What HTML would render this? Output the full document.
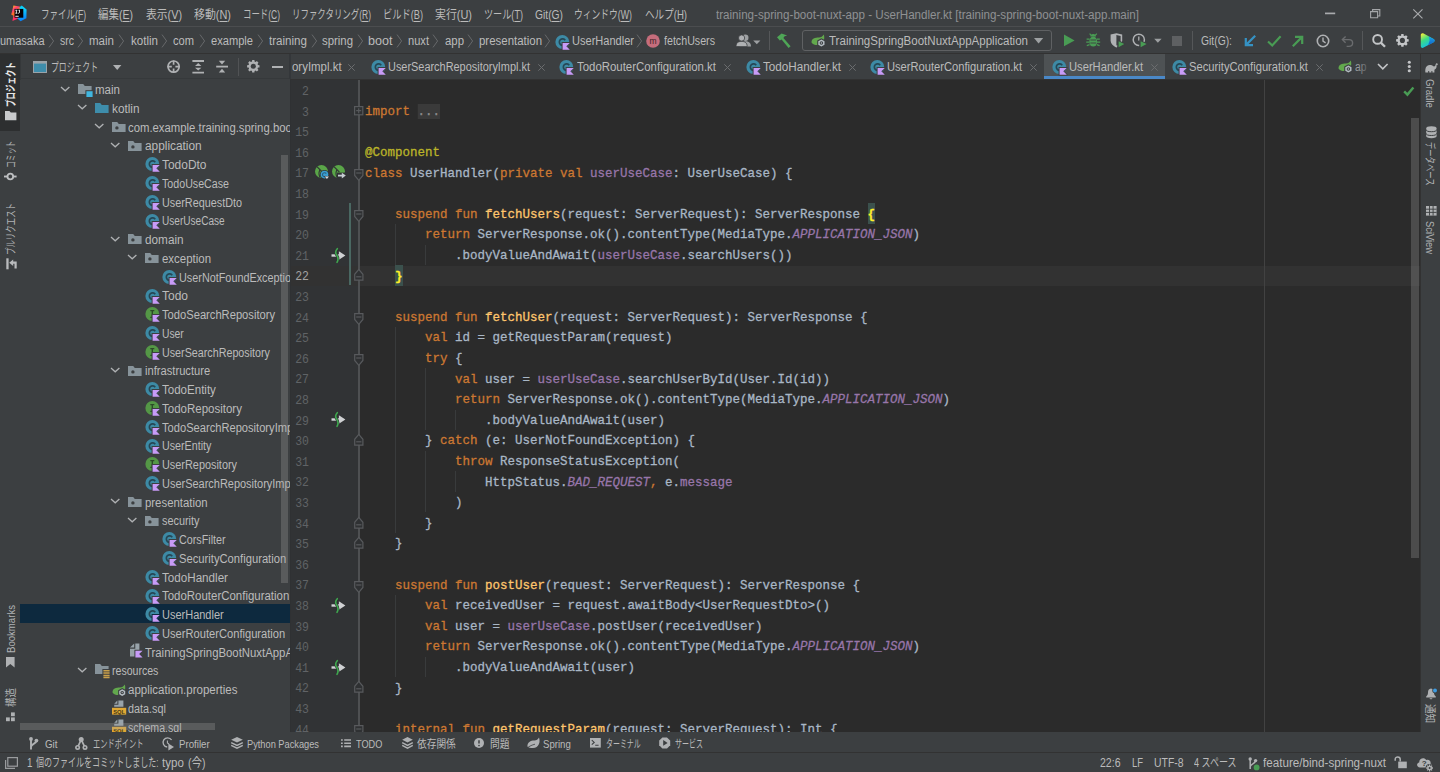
<!DOCTYPE html><html lang="ja"><head><meta charset="utf-8"><title>UserHandler.kt</title><style>html,body{margin:0;padding:0;background:#3c3f41;}#app{position:relative;width:1440px;height:772px;overflow:hidden;background:#3c3f41;font-family:'Liberation Sans','Noto Sans CJK JP',sans-serif;font-size:12px;color:#bbbbbb;}#app span,#app div,#app svg{box-sizing:border-box}svg{overflow:visible}</style></head><body><div id="app"><div style="position:absolute;left:0px;top:0px;width:1440px;height:772px;background:#3c3f41;"></div>
<span style="position:absolute;left:41px;top:1.7px;height:27px;line-height:27px;font-size:12px;color:#bbbbbb;white-space:pre;transform:scaleX(0.7106);transform-origin:0 50%;">ファイル(<u style="text-underline-offset:1.5px;text-decoration-thickness:1px">F</u>)</span>
<span style="position:absolute;left:98px;top:1.7px;height:27px;line-height:27px;font-size:12px;color:#bbbbbb;white-space:pre;transform:scaleX(0.8750);transform-origin:0 50%;">編集(<u style="text-underline-offset:1.5px;text-decoration-thickness:1px">E</u>)</span>
<span style="position:absolute;left:146px;top:1.7px;height:27px;line-height:27px;font-size:12px;color:#bbbbbb;white-space:pre;transform:scaleX(0.9000);transform-origin:0 50%;">表示(<u style="text-underline-offset:1.5px;text-decoration-thickness:1px">V</u>)</span>
<span style="position:absolute;left:194px;top:1.7px;height:27px;line-height:27px;font-size:12px;color:#bbbbbb;white-space:pre;transform:scaleX(0.9097);transform-origin:0 50%;">移動(<u style="text-underline-offset:1.5px;text-decoration-thickness:1px">N</u>)</span>
<span style="position:absolute;left:243px;top:1.7px;height:27px;line-height:27px;font-size:12px;color:#bbbbbb;white-space:pre;transform:scaleX(0.7025);transform-origin:0 50%;">コード(<u style="text-underline-offset:1.5px;text-decoration-thickness:1px">C</u>)</span>
<span style="position:absolute;left:292px;top:1.7px;height:27px;line-height:27px;font-size:12px;color:#bbbbbb;white-space:pre;transform:scaleX(0.7042);transform-origin:0 50%;">リファクタリング(<u style="text-underline-offset:1.5px;text-decoration-thickness:1px">R</u>)</span>
<span style="position:absolute;left:383px;top:1.7px;height:27px;line-height:27px;font-size:12px;color:#bbbbbb;white-space:pre;transform:scaleX(0.7692);transform-origin:0 50%;">ビルド(<u style="text-underline-offset:1.5px;text-decoration-thickness:1px">B</u>)</span>
<span style="position:absolute;left:435px;top:1.7px;height:27px;line-height:27px;font-size:12px;color:#bbbbbb;white-space:pre;transform:scaleX(0.9097);transform-origin:0 50%;">実行(<u style="text-underline-offset:1.5px;text-decoration-thickness:1px">U</u>)</span>
<span style="position:absolute;left:484px;top:1.7px;height:27px;line-height:27px;font-size:12px;color:#bbbbbb;white-space:pre;transform:scaleX(0.7598);transform-origin:0 50%;">ツール(<u style="text-underline-offset:1.5px;text-decoration-thickness:1px">T</u>)</span>
<span style="position:absolute;left:535px;top:1.7px;height:27px;line-height:27px;font-size:12px;color:#bbbbbb;white-space:pre;transform:scaleX(0.8570);transform-origin:0 50%;">Git(<u style="text-underline-offset:1.5px;text-decoration-thickness:1px">G</u>)</span>
<span style="position:absolute;left:574px;top:1.7px;height:27px;line-height:27px;font-size:12px;color:#bbbbbb;white-space:pre;transform:scaleX(0.7311);transform-origin:0 50%;">ウィンドウ(<u style="text-underline-offset:1.5px;text-decoration-thickness:1px">W</u>)</span>
<span style="position:absolute;left:645px;top:1.7px;height:27px;line-height:27px;font-size:12px;color:#bbbbbb;white-space:pre;transform:scaleX(0.7974);transform-origin:0 50%;">ヘルプ(<u style="text-underline-offset:1.5px;text-decoration-thickness:1px">H</u>)</span>
<span style="position:absolute;left:716px;top:1.5px;height:27px;line-height:27px;font-size:12px;color:#8f9193;white-space:pre;transform:scaleX(0.9668);transform-origin:0 50%;">training-spring-boot-nuxt-app - UserHandler.kt [training-spring-boot-nuxt-app.main]</span>
<svg style="position:absolute;left:10.8px;top:5px;" width="17" height="17" viewBox="0 0 17 17"><linearGradient id="lg1" x1="0.1" y1="0" x2="0.6" y2="1"><stop offset="0" stop-color="#fdc80e"/><stop offset="0.28" stop-color="#fe3a7a"/><stop offset="0.5" stop-color="#fd7a1a"/><stop offset="0.75" stop-color="#fe2d6a"/><stop offset="1" stop-color="#fe2857"/></linearGradient><linearGradient id="lg2" x1="0.3" y1="0" x2="0.5" y2="1"><stop offset="0" stop-color="#07c3f2"/><stop offset="0.25" stop-color="#10d4fa"/><stop offset="1" stop-color="#087cfa"/></linearGradient><path d="M2.4,0.6 L8.8,1.4 L9.8,9 L6.8,13.8 L1.4,15.9 L2.4,10.8 L0.2,9.4 L1.2,5.8 z" fill="url(#lg1)"/><path d="M8.6,2 L10.8,0.4 L15.6,4.4 L15.4,13.2 L9.6,16.3 L6.4,13.6 L9.2,8.6 z" fill="url(#lg2)"/><rect x="3.5" y="3.9" width="8.8" height="8.8" fill="#050005"/><rect x="4.3" y="10.8" width="3.4" height="0.95" fill="#ffffff"/><path d="M4.3,5.2 h2.1 M5.35,5.2 v3 M4.3,8.2 h2.1 M8.5,5.2 v2.2 c0,0.9 -1,1.1 -1.5,0.5 M7.4,5.2 h1.6" stroke="#ffffff" stroke-width="0.85" fill="none"/></svg>
<svg style="position:absolute;left:1325.4px;top:12.4px;" width="11" height="3" viewBox="0 0 11 3"><path d="M0,1.4 h10.2" stroke="#a9abad" stroke-width="1.7"/></svg>
<svg style="position:absolute;left:1369.6px;top:8.8px;" width="11" height="10" viewBox="0 0 11 10"><path d="M0.6,2.6 h7 v6.2 h-7 z" fill="none" stroke="#a4a6a8" stroke-width="1.1"/><path d="M2.6,2.4 v-1.8 h7.2 v6.4 h-2" fill="none" stroke="#a4a6a8" stroke-width="1.1"/></svg>
<svg style="position:absolute;left:1413.4px;top:8.9px;" width="10" height="10" viewBox="0 0 10 10"><path d="M0.3,0.3 L9.5,9.3 M9.5,0.3 L0.3,9.3" stroke="#a9abad" stroke-width="1.15"/></svg>
<div style="position:absolute;left:0px;top:26px;width:1440px;height:1px;background:#4b4d4f;"></div>
<span style="position:absolute;left:0px;top:28.2px;height:27px;line-height:27px;font-size:12px;color:#bbbbbb;white-space:pre;transform:scaleX(0.9137);transform-origin:0 50%;">umasaka</span>
<span style="position:absolute;left:60px;top:28.2px;height:27px;line-height:27px;font-size:12px;color:#bbbbbb;white-space:pre;transform:scaleX(0.8750);transform-origin:0 50%;">src</span>
<span style="position:absolute;left:89px;top:28.2px;height:27px;line-height:27px;font-size:12px;color:#bbbbbb;white-space:pre;transform:scaleX(0.9610);transform-origin:0 50%;">main</span>
<span style="position:absolute;left:131px;top:28.2px;height:27px;line-height:27px;font-size:12px;color:#bbbbbb;white-space:pre;transform:scaleX(0.9637);transform-origin:0 50%;">kotlin</span>
<span style="position:absolute;left:173px;top:28.2px;height:27px;line-height:27px;font-size:12px;color:#bbbbbb;white-space:pre;transform:scaleX(0.9263);transform-origin:0 50%;">com</span>
<span style="position:absolute;left:211px;top:28.2px;height:27px;line-height:27px;font-size:12px;color:#bbbbbb;white-space:pre;transform:scaleX(0.9259);transform-origin:0 50%;">example</span>
<span style="position:absolute;left:269px;top:28.2px;height:27px;line-height:27px;font-size:12px;color:#bbbbbb;white-space:pre;transform:scaleX(0.9655);transform-origin:0 50%;">training</span>
<span style="position:absolute;left:322px;top:28.2px;height:27px;line-height:27px;font-size:12px;color:#bbbbbb;white-space:pre;transform:scaleX(0.9484);transform-origin:0 50%;">spring</span>
<span style="position:absolute;left:368px;top:28.2px;height:27px;line-height:27px;font-size:12px;color:#bbbbbb;white-space:pre;transform:scaleX(1.0488);transform-origin:0 50%;">boot</span>
<span style="position:absolute;left:408px;top:28.2px;height:27px;line-height:27px;font-size:12px;color:#bbbbbb;white-space:pre;transform:scaleX(0.9256);transform-origin:0 50%;">nuxt</span>
<span style="position:absolute;left:445px;top:28.2px;height:27px;line-height:27px;font-size:12px;color:#bbbbbb;white-space:pre;transform:scaleX(0.9485);transform-origin:0 50%;">app</span>
<span style="position:absolute;left:479px;top:28.2px;height:27px;line-height:27px;font-size:12px;color:#bbbbbb;white-space:pre;transform:scaleX(0.9539);transform-origin:0 50%;">presentation</span>
<svg style="position:absolute;left:47.6px;top:34.2px;" width="7" height="15" viewBox="0 0 7 15"><path d="M1,0.6 L5.6,7 L1,13.4" fill="none" stroke="#66686a" stroke-width="1"/></svg>
<svg style="position:absolute;left:76.8px;top:34.2px;" width="7" height="15" viewBox="0 0 7 15"><path d="M1,0.6 L5.6,7 L1,13.4" fill="none" stroke="#66686a" stroke-width="1"/></svg>
<svg style="position:absolute;left:118px;top:34.2px;" width="7" height="15" viewBox="0 0 7 15"><path d="M1,0.6 L5.6,7 L1,13.4" fill="none" stroke="#66686a" stroke-width="1"/></svg>
<svg style="position:absolute;left:161.4px;top:34.2px;" width="7" height="15" viewBox="0 0 7 15"><path d="M1,0.6 L5.6,7 L1,13.4" fill="none" stroke="#66686a" stroke-width="1"/></svg>
<svg style="position:absolute;left:198.6px;top:34.2px;" width="7" height="15" viewBox="0 0 7 15"><path d="M1,0.6 L5.6,7 L1,13.4" fill="none" stroke="#66686a" stroke-width="1"/></svg>
<svg style="position:absolute;left:257px;top:34.2px;" width="7" height="15" viewBox="0 0 7 15"><path d="M1,0.6 L5.6,7 L1,13.4" fill="none" stroke="#66686a" stroke-width="1"/></svg>
<svg style="position:absolute;left:310.6px;top:34.2px;" width="7" height="15" viewBox="0 0 7 15"><path d="M1,0.6 L5.6,7 L1,13.4" fill="none" stroke="#66686a" stroke-width="1"/></svg>
<svg style="position:absolute;left:357px;top:34.2px;" width="7" height="15" viewBox="0 0 7 15"><path d="M1,0.6 L5.6,7 L1,13.4" fill="none" stroke="#66686a" stroke-width="1"/></svg>
<svg style="position:absolute;left:396px;top:34.2px;" width="7" height="15" viewBox="0 0 7 15"><path d="M1,0.6 L5.6,7 L1,13.4" fill="none" stroke="#66686a" stroke-width="1"/></svg>
<svg style="position:absolute;left:432px;top:34.2px;" width="7" height="15" viewBox="0 0 7 15"><path d="M1,0.6 L5.6,7 L1,13.4" fill="none" stroke="#66686a" stroke-width="1"/></svg>
<svg style="position:absolute;left:467.4px;top:34.2px;" width="7" height="15" viewBox="0 0 7 15"><path d="M1,0.6 L5.6,7 L1,13.4" fill="none" stroke="#66686a" stroke-width="1"/></svg>
<svg style="position:absolute;left:544.2px;top:34.2px;" width="7" height="15" viewBox="0 0 7 15"><path d="M1,0.6 L5.6,7 L1,13.4" fill="none" stroke="#66686a" stroke-width="1"/></svg>
<svg style="position:absolute;left:636.4px;top:34.2px;" width="7" height="15" viewBox="0 0 7 15"><path d="M1,0.6 L5.6,7 L1,13.4" fill="none" stroke="#66686a" stroke-width="1"/></svg>
<svg style="position:absolute;left:555px;top:33.5px;" width="17" height="18" viewBox="0 0 17 18"><circle cx="7.3" cy="8" r="6.9" fill="#3d8aa5"/><path d="M10.2,6.3 A3.2,3.2 0 1 0 10.2,9.9" fill="none" stroke="#264755" stroke-width="1.7"/><path d="M6.6,7.8999999999999995 h9 v1 l-3.4,3.3 l3.4,3.4 v1 h-9 z" fill="#3c3f41"/><path d="M7.6,8.9 h7.2 l-3.5,3.4 l3.5,3.4 h-7.2 z" fill="#c79bf7"/></svg>
<span style="position:absolute;left:572px;top:28.2px;height:27px;line-height:27px;font-size:12px;color:#bbbbbb;white-space:pre;transform:scaleX(0.9204);transform-origin:0 50%;">UserHandler</span>
<svg style="position:absolute;left:646px;top:34.3px;" width="14" height="14" viewBox="0 0 14 14"><circle cx="7" cy="7" r="6.8" fill="#c56d7c"/><text x="7" y="10" font-family="'Liberation Sans',sans-serif" font-size="8.5" fill="#3c2226" text-anchor="middle">m</text></svg>
<span style="position:absolute;left:664px;top:28.2px;height:27px;line-height:27px;font-size:12px;color:#bbbbbb;white-space:pre;transform:scaleX(0.8891);transform-origin:0 50%;">fetchUsers</span>
<svg style="position:absolute;left:736px;top:34px;" width="26" height="15" viewBox="0 0 26 15"><circle cx="9.3" cy="3.8" r="3.2" fill="#9da0a2"/><path d="M3.6,12.6 c0,-4 2.4,-5.4 5.7,-5.4 s5.7,1.4 5.7,5.4 z" fill="#9da0a2"/><circle cx="5.6" cy="4" r="3.1" fill="#afb1b3" stroke="#3c3f41" stroke-width="0.8"/><path d="M0,12.6 c0,-4 2.4,-5.2 5.6,-5.2 s5.6,1.2 5.6,5.2 z" fill="#afb1b3" stroke="#3c3f41" stroke-width="0.8"/><path d="M17.2,6.4 h7.2 l-3.6,3.8 z" fill="#9da0a2"/></svg>
<div style="position:absolute;left:768.5px;top:31px;width:1px;height:19px;background:#555759;"></div>
<svg style="position:absolute;left:776px;top:33px;" width="16" height="16" viewBox="0 0 16 16"><path d="M1,4.2 L5.6,0.6 L11.2,2.4 L8.6,3.2 L7.4,5 L14.6,13.2 L12.6,15 L5.6,6.6 L3.8,7.6 z" fill="#4fa657"/></svg>
<div style="position:absolute;left:802px;top:30px;width:250px;height:21px;border:1px solid #5f6163;border-radius:3px;"></div>
<svg style="position:absolute;left:810.5px;top:34.4px;" width="16" height="16" viewBox="0 0 16 16"><path d="M0.5,8.4 C0.5,4.5 4,3.6 8,3.6 C10,3.6 11.6,2.4 12.8,0.6 C14.2,5 12.7,11 6.5,11 C3.5,11 2,10.4 0.5,8.4 z" fill="#62a84d"/><path d="M10.4,4.2 L14.6,6.6 V11.4 L10.4,13.8 L6.2,11.4 V6.6 z" fill="#3c3f41"/><path d="M10.4,5.4 L13.5,7.2 V10.8 L10.4,12.6 L7.3,10.8 V7.2 z" fill="#b4bcc2"/><circle cx="10.4" cy="9" r="1.8" fill="#3c3f41"/><circle cx="10.4" cy="9" r="0.75" fill="#b4bcc2"/></svg>
<span style="position:absolute;left:829px;top:28px;height:27px;line-height:27px;font-size:12px;color:#bbbbbb;white-space:pre;transform:scaleX(0.9613);transform-origin:0 50%;">TrainingSpringBootNuxtAppApplication</span>
<svg style="position:absolute;left:1034px;top:38px;" width="10" height="6" viewBox="0 0 10 6"><path d="M0,0 h9.2 l-4.6,5.4 z" fill="#9da0a2"/></svg>
<svg style="position:absolute;left:1063px;top:34px;" width="13" height="13" viewBox="0 0 13 13"><path d="M1,0.6 L11.6,6.4 L1,12.2 z" fill="#499c54"/></svg>
<svg style="position:absolute;left:1086px;top:33px;" width="15" height="15" viewBox="0 0 15 15"><ellipse cx="7.2" cy="8.6" rx="3.9" ry="5" fill="#499c54"/><path d="M4.4,3.6 a2.8,2.6 0 0 1 5.6,0 z" fill="#499c54"/><path d="M0.6,6.2 h3 M0.2,9.2 h3.2 M0.8,12.6 l2.8,-1 M13.8,6.2 h-3 M14.2,9.2 h-3.2 M13.6,12.6 l-2.8,-1 M3.6,0.6 l1.6,1.8 M10.8,0.6 l-1.6,1.8" stroke="#499c54" stroke-width="1.2" fill="none"/><path d="M4.4,7 h5.6 M4.4,10 h5.6" stroke="#3c3f41" stroke-width="0.9"/></svg>
<svg style="position:absolute;left:1110px;top:33px;" width="16" height="16" viewBox="0 0 16 16"><path d="M0.6,1.6 L6.4,0.2 L12.2,1.6 V7.2 C12.2,10.8 9.4,13 6.4,14.4 C3.4,13 0.6,10.8 0.6,7.2 z" fill="#afb1b3"/><path d="M6.4,2 L10.6,3 V7.2 C10.6,9.6 8.6,11.4 6.4,12.6 z" fill="#3c3f41"/><path d="M7.2,6.4 L16,11 L7.2,15.8 z" fill="#3c3f41"/><path d="M8.6,8.2 L14.2,11.1 L8.6,14.2 z" fill="#499c54"/></svg>
<svg style="position:absolute;left:1132px;top:33px;" width="30" height="16" viewBox="0 0 30 16"><circle cx="6.8" cy="6.8" r="5.6" fill="none" stroke="#afb1b3" stroke-width="1.5"/><path d="M6.8,3.6 V7 L9,8.6" fill="none" stroke="#afb1b3" stroke-width="1.3"/><path d="M7.2,6.4 L16.6,11 L7.2,15.8 z" fill="#3c3f41"/><path d="M8.6,8.2 L14.6,11.1 L8.6,14.2 z" fill="#499c54"/><path d="M22.2,5.8 h7.4 l-3.7,4 z" fill="#9da0a2"/></svg>
<div style="position:absolute;left:1172px;top:36px;width:10px;height:10px;background:#5e6062;"></div>
<div style="position:absolute;left:1192px;top:31px;width:1px;height:19px;background:#555759;"></div>
<span style="position:absolute;left:1201px;top:28px;height:27px;line-height:27px;font-size:12px;color:#bbbbbb;white-space:pre;transform:scaleX(0.8611);transform-origin:0 50%;">Git(G):</span>
<svg style="position:absolute;left:1244px;top:35px;" width="13" height="13" viewBox="0 0 13 13"><path d="M11.2,0.8 L2.6,9.4 M1.8,3 V10.2 H9" fill="none" stroke="#3592c4" stroke-width="2.2"/></svg>
<svg style="position:absolute;left:1267px;top:35px;" width="15" height="12" viewBox="0 0 15 12"><path d="M1,6.4 L5.2,10.4 L13.6,1.2" fill="none" stroke="#499c54" stroke-width="2.1"/></svg>
<svg style="position:absolute;left:1292px;top:35px;" width="13" height="13" viewBox="0 0 13 13"><path d="M0.8,11.2 L9.4,2.6 M3,1.8 H10.2 V9" fill="none" stroke="#499c54" stroke-width="2.2"/></svg>
<svg style="position:absolute;left:1316px;top:34px;" width="14" height="14" viewBox="0 0 14 14"><circle cx="7" cy="7" r="5.7" fill="none" stroke="#afb1b3" stroke-width="1.6"/><path d="M7,3.6 V7.2 L9.6,8.8" fill="none" stroke="#afb1b3" stroke-width="1.4"/></svg>
<svg style="position:absolute;left:1341px;top:35px;" width="13" height="13" viewBox="0 0 13 13"><path d="M1.6,4.6 H8 C10.6,4.6 11.6,6.4 11.6,8 C11.6,9.8 10.4,11.4 8,11.4 H5.6" fill="none" stroke="#6a6c6e" stroke-width="1.4"/><path d="M4.6,1.4 L1.4,4.6 L4.6,7.8" fill="none" stroke="#6a6c6e" stroke-width="1.4"/></svg>
<div style="position:absolute;left:1361.5px;top:31px;width:1px;height:19px;background:#555759;"></div>
<svg style="position:absolute;left:1371.6px;top:33.8px;" width="14" height="14" viewBox="0 0 14 14"><circle cx="5.6" cy="5.4" r="4.4" fill="none" stroke="#c3c5c7" stroke-width="1.9"/><path d="M8.8,8.6 L13,12.8" stroke="#c3c5c7" stroke-width="2.3"/></svg>
<svg style="position:absolute;left:1396px;top:34.2px;" width="12.8" height="12.8" viewBox="0 0 12.8 12.8"><path d="M5.10,1.65 L5.25,0.10 L7.55,0.10 L7.70,1.65 L8.84,2.12 L10.04,1.14 L11.66,2.76 L10.68,3.96 L11.15,5.10 L12.70,5.25 L12.70,7.55 L11.15,7.70 L10.68,8.84 L11.66,10.04 L10.04,11.66 L8.84,10.68 L7.70,11.15 L7.55,12.70 L5.25,12.70 L5.10,11.15 L3.96,10.68 L2.76,11.66 L1.14,10.04 L2.12,8.84 L1.65,7.70 L0.10,7.55 L0.10,5.25 L1.65,5.10 L2.12,3.96 L1.14,2.76 L2.76,1.14 L3.96,2.12 z" fill="#c3c5c7"/><circle cx="6.4" cy="6.4" r="2.56" fill="#3c3f41"/></svg>
<svg style="position:absolute;left:1419.6px;top:32.8px;" width="16" height="16" viewBox="0 0 16 16"><linearGradient id="cg1" x1="0" y1="0" x2="0.55" y2="1"><stop offset="0.05" stop-color="#f4f03a"/><stop offset="0.45" stop-color="#3ddc84"/><stop offset="0.95" stop-color="#10bdf0"/></linearGradient><linearGradient id="cg2" x1="0" y1="0" x2="0" y2="1"><stop offset="0" stop-color="#18a7e8"/><stop offset="1" stop-color="#1560c8"/></linearGradient><path d="M0.8,2.2 C0.8,0.6 2.2,-0.2 3.6,0.6 L13.6,6 C15,6.8 15,8.4 13.6,9.2 L3.6,14.6 C2.2,15.4 0.8,14.6 0.8,13 z" fill="url(#cg1)"/><path d="M8.8,3.4 L13.6,6 C15,6.8 15,8.4 13.6,9.2 L8.2,12.2 L9.6,7.6 z" fill="url(#cg2)"/></svg>
<div style="position:absolute;left:0px;top:53px;width:1440px;height:1px;background:#323232;"></div>
<div style="position:absolute;left:0px;top:54px;width:20px;height:678px;background:#3c3f41;"></div>
<div style="position:absolute;left:19.7px;top:54px;width:0.9px;height:678px;background:#35383a;"></div>
<div style="position:absolute;left:0px;top:54px;width:20px;height:77px;background:#2d2f30;"></div>
<span style="position:absolute;left:1px;top:106.5px;height:20px;line-height:20px;font-size:11px;color:#e6e6e6;white-space:pre;transform-origin:0 0;transform:rotate(-90deg) scaleX(0.6818);font-weight:bold;">プロジェクト</span>
<svg style="position:absolute;left:4.5px;top:110.5px;" width="12" height="10" viewBox="0 0 12 10"><path d="M0,0 h4.4 l1.4,1.6 h5.6 v7.6 h-11.4 z" fill="#c8cacc"/></svg>
<span style="position:absolute;left:1px;top:168.2px;height:20px;line-height:20px;font-size:11px;color:#b0b2b4;white-space:pre;transform-origin:0 0;transform:rotate(-90deg) scaleX(0.6250);">コミット</span>
<svg style="position:absolute;left:4.3px;top:171.6px;" width="13" height="9" viewBox="0 0 13 9"><path d="M0,4.5 h12.6" stroke="#bdbfc1" stroke-width="1.9"/><circle cx="6.3" cy="4.5" r="2.85" fill="#3c3f41" stroke="#bdbfc1" stroke-width="1.9"/></svg>
<span style="position:absolute;left:1px;top:254.5px;height:20px;line-height:20px;font-size:11px;color:#b0b2b4;white-space:pre;transform-origin:0 0;transform:rotate(-90deg) scaleX(0.6753);">プルリクエスト</span>
<svg style="position:absolute;left:5.8px;top:257.8px;" width="12" height="12" viewBox="0 0 12 12"><rect x="0.3" y="0.3" width="2.3" height="11" fill="#b9bbbd"/><path d="M9.6,10.6 V4.7 H5.6" fill="none" stroke="#b9bbbd" stroke-width="2.2"/><path d="M3.2,4.7 L7.2,1.5 V7.9 z" fill="#b9bbbd"/></svg>
<span style="position:absolute;left:1px;top:652.6px;height:20px;line-height:20px;font-size:11px;color:#b0b2b4;white-space:pre;transform-origin:0 0;transform:rotate(-90deg) scaleX(0.8722);">Bookmarks</span>
<svg style="position:absolute;left:6.2px;top:657.4px;" width="9" height="11" viewBox="0 0 9 11"><path d="M0,0 h8.6 v10.6 l-4.3,-3.6 l-4.3,3.6 z" fill="#afb1b3"/></svg>
<span style="position:absolute;left:1px;top:706.5px;height:20px;line-height:20px;font-size:11px;color:#b0b2b4;white-space:pre;transform-origin:0 0;transform:rotate(-90deg) scaleX(0.8636);">構造</span>
<svg style="position:absolute;left:6.3px;top:712px;" width="10" height="10" viewBox="0 0 10 10"><rect x="0" y="5.4" width="3.8" height="3.8" fill="#afb1b3"/><rect x="5" y="5.4" width="3.8" height="3.8" fill="#afb1b3"/><rect x="5" y="0.4" width="3.8" height="3.8" fill="#afb1b3"/></svg>
<div style="position:absolute;left:21px;top:54px;width:269px;height:26px;background:#3c3f41;"></div>
<div style="position:absolute;left:20.5px;top:77.9px;width:269.5px;height:1px;background:#36393b;"></div>
<div style="position:absolute;left:289.5px;top:54px;width:1.1px;height:25px;background:#36393b;"></div>
<svg style="position:absolute;left:33px;top:61px;" width="14" height="12" viewBox="0 0 14 12"><rect x="0.5" y="0.5" width="13" height="11" fill="#3e8dab" stroke="#9aa3a9" stroke-width="1"/><rect x="0" y="0" width="14" height="2.6" fill="#9aa3a9"/></svg>
<span style="position:absolute;left:51px;top:54.8px;height:26px;line-height:26px;font-size:12px;color:#bbbbbb;white-space:pre;transform:scaleX(0.6526);transform-origin:0 50%;">プロジェクト</span>
<svg style="position:absolute;left:112.5px;top:64.5px;" width="9" height="6" viewBox="0 0 9 6"><path d="M0,0 h8.4 l-4.2,5 z" fill="#afb1b3"/></svg>
<svg style="position:absolute;left:166.5px;top:59.8px;" width="14" height="14" viewBox="0 0 14 14"><circle cx="6.6" cy="6.6" r="5.6" fill="none" stroke="#afb1b3" stroke-width="1.7"/><path d="M6.6,0.4 v4.4 M6.6,8.4 v4.4 M0.4,6.6 h4.4 M8.4,6.6 h4.4" stroke="#afb1b3" stroke-width="1.7"/></svg>
<svg style="position:absolute;left:191.5px;top:59.6px;" width="13" height="14" viewBox="0 0 13 14"><path d="M0.4,1 h11.6 M0.4,12.6 h11.6" stroke="#afb1b3" stroke-width="1.9"/><path d="M3,5.9 L6.2,3 L9.4,5.9 z M3,7.7 L6.2,10.6 L9.4,7.7 z" fill="#afb1b3"/></svg>
<svg style="position:absolute;left:216px;top:59.8px;" width="13" height="14" viewBox="0 0 13 14"><path d="M0.2,6.6 h11.8" stroke="#afb1b3" stroke-width="1.8"/><path d="M2.8,0.8 L6,4.4 L9.2,0.8 z M2.8,12.4 L6,8.8 L9.2,12.4 z" fill="#afb1b3"/></svg>
<div style="position:absolute;left:237.5px;top:58px;width:1px;height:18px;background:#515355;"></div>
<svg style="position:absolute;left:247.2px;top:60.2px;" width="12.6" height="12.6" viewBox="0 0 12.6 12.6"><path d="M5.02,1.62 L5.17,0.10 L7.43,0.10 L7.58,1.62 L8.70,2.09 L9.88,1.12 L11.48,2.72 L10.51,3.90 L10.98,5.02 L12.50,5.17 L12.50,7.43 L10.98,7.58 L10.51,8.70 L11.48,9.88 L9.88,11.48 L8.70,10.51 L7.58,10.98 L7.43,12.50 L5.17,12.50 L5.02,10.98 L3.90,10.51 L2.72,11.48 L1.12,9.88 L2.09,8.70 L1.62,7.58 L0.10,7.43 L0.10,5.17 L1.62,5.02 L2.09,3.90 L1.12,2.72 L2.72,1.12 L3.90,2.09 z" fill="#afb1b3"/><circle cx="6.3" cy="6.3" r="2.52" fill="#3c3f41"/></svg>
<div style="position:absolute;left:271.8px;top:65.8px;width:11.6px;height:1.8px;background:#afb1b3;"></div>
<div style="position:absolute;left:20px;top:80px;width:270.3px;height:652px;overflow:hidden;background:#3c3f41">
<svg style="position:absolute;left:40.0px;top:5.68px;" width="11" height="7" viewBox="0 0 11 7"><path d="M1,1 L5.2,4.8 L9.4,1" fill="none" stroke="#afb1b3" stroke-width="1.3"/></svg>
<svg style="position:absolute;left:58.0px;top:4.27px;" width="16" height="14" viewBox="0 0 16 14"><path d="M0,0 h5.2 l1.6,1.9 h6.8 v8.1 h-13.6 z" fill="#87939a"/><rect x="7.4" y="6.2" width="7.6" height="7.6" fill="#3c3f41"/><rect x="8.4" y="7.2" width="6.2" height="5.8" fill="#40b6e0"/></svg>
<span style="position:absolute;left:74.8px;top:1.0px;height:18.75px;line-height:18.75px;font-size:12px;color:#bbbbbb;white-space:pre;transform:scaleX(0.9610);transform-origin:0 50%;">main</span>
<svg style="position:absolute;left:56.75px;top:24.42px;" width="11" height="7" viewBox="0 0 11 7"><path d="M1,1 L5.2,4.8 L9.4,1" fill="none" stroke="#afb1b3" stroke-width="1.3"/></svg>
<svg style="position:absolute;left:74.75px;top:23.03px;" width="15" height="12" viewBox="0 0 15 12"><path d="M0,0 h5.2 l1.6,1.9 h6.8 v8.1 h-13.6 z" fill="#3e8dab"/></svg>
<span style="position:absolute;left:91.55px;top:19.75px;height:18.75px;line-height:18.75px;font-size:12px;color:#bbbbbb;white-space:pre;transform:scaleX(0.9816);transform-origin:0 50%;">kotlin</span>
<svg style="position:absolute;left:73.5px;top:43.18px;" width="11" height="7" viewBox="0 0 11 7"><path d="M1,1 L5.2,4.8 L9.4,1" fill="none" stroke="#afb1b3" stroke-width="1.3"/></svg>
<svg style="position:absolute;left:91.5px;top:41.78px;" width="15" height="12" viewBox="0 0 15 12"><path d="M0,0 h5.2 l1.6,1.9 h6.8 v8.1 h-13.6 z" fill="#87939a"/><circle cx="4.9" cy="5.9" r="1.7" fill="#3c3f41"/></svg>
<span style="position:absolute;left:108.3px;top:38.5px;height:18.75px;line-height:18.75px;font-size:12px;color:#bbbbbb;white-space:pre;transform:scaleX(0.9444);transform-origin:0 50%;">com.example.training.spring.boot</span>
<svg style="position:absolute;left:90.25px;top:61.92px;" width="11" height="7" viewBox="0 0 11 7"><path d="M1,1 L5.2,4.8 L9.4,1" fill="none" stroke="#afb1b3" stroke-width="1.3"/></svg>
<svg style="position:absolute;left:108.25px;top:60.52px;" width="15" height="12" viewBox="0 0 15 12"><path d="M0,0 h5.2 l1.6,1.9 h6.8 v8.1 h-13.6 z" fill="#87939a"/><circle cx="4.9" cy="5.9" r="1.7" fill="#3c3f41"/></svg>
<span style="position:absolute;left:125.05px;top:57.25px;height:18.75px;line-height:18.75px;font-size:12px;color:#bbbbbb;white-space:pre;transform:scaleX(0.9882);transform-origin:0 50%;">application</span>
<svg style="position:absolute;left:125.0px;top:76.47px;" width="17" height="18" viewBox="0 0 17 18"><circle cx="7.3" cy="8" r="6.9" fill="#3d8aa5"/><path d="M10.2,6.3 A3.2,3.2 0 1 0 10.2,9.9" fill="none" stroke="#264755" stroke-width="1.7"/><path d="M6.6,7.8999999999999995 h9 v1 l-3.4,3.3 l3.4,3.4 v1 h-9 z" fill="#3c3f41"/><path d="M7.6,8.9 h7.2 l-3.5,3.4 l3.5,3.4 h-7.2 z" fill="#c79bf7"/></svg>
<span style="position:absolute;left:141.8px;top:76.0px;height:18.75px;line-height:18.75px;font-size:12px;color:#bbbbbb;white-space:pre;transform:scaleX(0.9955);transform-origin:0 50%;">TodoDto</span>
<svg style="position:absolute;left:125.0px;top:95.22px;" width="17" height="18" viewBox="0 0 17 18"><circle cx="7.3" cy="8" r="6.9" fill="#3d8aa5"/><path d="M10.2,6.3 A3.2,3.2 0 1 0 10.2,9.9" fill="none" stroke="#264755" stroke-width="1.7"/><path d="M6.6,7.8999999999999995 h9 v1 l-3.4,3.3 l3.4,3.4 v1 h-9 z" fill="#3c3f41"/><path d="M7.6,8.9 h7.2 l-3.5,3.4 l3.5,3.4 h-7.2 z" fill="#c79bf7"/></svg>
<span style="position:absolute;left:141.8px;top:94.75px;height:18.75px;line-height:18.75px;font-size:12px;color:#bbbbbb;white-space:pre;transform:scaleX(0.8889);transform-origin:0 50%;">TodoUseCase</span>
<svg style="position:absolute;left:125.0px;top:113.97px;" width="17" height="18" viewBox="0 0 17 18"><circle cx="7.3" cy="8" r="6.9" fill="#3d8aa5"/><path d="M10.2,6.3 A3.2,3.2 0 1 0 10.2,9.9" fill="none" stroke="#264755" stroke-width="1.7"/><path d="M6.6,7.8999999999999995 h9 v1 l-3.4,3.3 l3.4,3.4 v1 h-9 z" fill="#3c3f41"/><path d="M7.6,8.9 h7.2 l-3.5,3.4 l3.5,3.4 h-7.2 z" fill="#c79bf7"/></svg>
<span style="position:absolute;left:141.8px;top:113.5px;height:18.75px;line-height:18.75px;font-size:12px;color:#bbbbbb;white-space:pre;transform:scaleX(0.9017);transform-origin:0 50%;">UserRequestDto</span>
<svg style="position:absolute;left:125.0px;top:132.72px;" width="17" height="18" viewBox="0 0 17 18"><circle cx="7.3" cy="8" r="6.9" fill="#3d8aa5"/><path d="M10.2,6.3 A3.2,3.2 0 1 0 10.2,9.9" fill="none" stroke="#264755" stroke-width="1.7"/><path d="M6.6,7.8999999999999995 h9 v1 l-3.4,3.3 l3.4,3.4 v1 h-9 z" fill="#3c3f41"/><path d="M7.6,8.9 h7.2 l-3.5,3.4 l3.5,3.4 h-7.2 z" fill="#c79bf7"/></svg>
<span style="position:absolute;left:141.8px;top:132.25px;height:18.75px;line-height:18.75px;font-size:12px;color:#bbbbbb;white-space:pre;transform:scaleX(0.8393);transform-origin:0 50%;">UserUseCase</span>
<svg style="position:absolute;left:90.25px;top:155.68px;" width="11" height="7" viewBox="0 0 11 7"><path d="M1,1 L5.2,4.8 L9.4,1" fill="none" stroke="#afb1b3" stroke-width="1.3"/></svg>
<svg style="position:absolute;left:108.25px;top:154.27px;" width="15" height="12" viewBox="0 0 15 12"><path d="M0,0 h5.2 l1.6,1.9 h6.8 v8.1 h-13.6 z" fill="#87939a"/><circle cx="4.9" cy="5.9" r="1.7" fill="#3c3f41"/></svg>
<span style="position:absolute;left:125.05px;top:151.0px;height:18.75px;line-height:18.75px;font-size:12px;color:#bbbbbb;white-space:pre;transform:scaleX(0.9807);transform-origin:0 50%;">domain</span>
<svg style="position:absolute;left:107.0px;top:174.42px;" width="11" height="7" viewBox="0 0 11 7"><path d="M1,1 L5.2,4.8 L9.4,1" fill="none" stroke="#afb1b3" stroke-width="1.3"/></svg>
<svg style="position:absolute;left:125.0px;top:173.02px;" width="15" height="12" viewBox="0 0 15 12"><path d="M0,0 h5.2 l1.6,1.9 h6.8 v8.1 h-13.6 z" fill="#87939a"/><circle cx="4.9" cy="5.9" r="1.7" fill="#3c3f41"/></svg>
<span style="position:absolute;left:141.8px;top:169.75px;height:18.75px;line-height:18.75px;font-size:12px;color:#bbbbbb;white-space:pre;transform:scaleX(0.9538);transform-origin:0 50%;">exception</span>
<svg style="position:absolute;left:141.75px;top:188.97px;" width="17" height="18" viewBox="0 0 17 18"><circle cx="7.3" cy="8" r="6.9" fill="#3d8aa5"/><path d="M10.2,6.3 A3.2,3.2 0 1 0 10.2,9.9" fill="none" stroke="#264755" stroke-width="1.7"/><path d="M6.6,7.8999999999999995 h9 v1 l-3.4,3.3 l3.4,3.4 v1 h-9 z" fill="#3c3f41"/><path d="M7.6,8.9 h7.2 l-3.5,3.4 l3.5,3.4 h-7.2 z" fill="#c79bf7"/></svg>
<span style="position:absolute;left:158.55px;top:188.5px;height:18.75px;line-height:18.75px;font-size:12px;color:#bbbbbb;white-space:pre;transform:scaleX(0.9030);transform-origin:0 50%;">UserNotFoundException</span>
<svg style="position:absolute;left:125.0px;top:207.72px;" width="17" height="18" viewBox="0 0 17 18"><circle cx="7.3" cy="8" r="6.9" fill="#3d8aa5"/><path d="M10.2,6.3 A3.2,3.2 0 1 0 10.2,9.9" fill="none" stroke="#264755" stroke-width="1.7"/><path d="M6.6,7.8999999999999995 h9 v1 l-3.4,3.3 l3.4,3.4 v1 h-9 z" fill="#3c3f41"/><path d="M7.6,8.9 h7.2 l-3.5,3.4 l3.5,3.4 h-7.2 z" fill="#c79bf7"/></svg>
<span style="position:absolute;left:141.8px;top:207.25px;height:18.75px;line-height:18.75px;font-size:12px;color:#bbbbbb;white-space:pre;transform:scaleX(0.9988);transform-origin:0 50%;">Todo</span>
<svg style="position:absolute;left:125.0px;top:226.47px;" width="17" height="18" viewBox="0 0 17 18"><circle cx="7.3" cy="8" r="6.9" fill="#549746"/><path d="M5.3,4.6 h4 M7.3,4.6 v6.8 M5.3,11.4 h4" fill="none" stroke="#2c4a28" stroke-width="1.4"/><path d="M6.6,7.8999999999999995 h9 v1 l-3.4,3.3 l3.4,3.4 v1 h-9 z" fill="#3c3f41"/><path d="M7.6,8.9 h7.2 l-3.5,3.4 l3.5,3.4 h-7.2 z" fill="#c79bf7"/></svg>
<span style="position:absolute;left:141.8px;top:226.0px;height:18.75px;line-height:18.75px;font-size:12px;color:#bbbbbb;white-space:pre;transform:scaleX(0.9308);transform-origin:0 50%;">TodoSearchRepository</span>
<svg style="position:absolute;left:125.0px;top:245.22px;" width="17" height="18" viewBox="0 0 17 18"><circle cx="7.3" cy="8" r="6.9" fill="#3d8aa5"/><path d="M10.2,6.3 A3.2,3.2 0 1 0 10.2,9.9" fill="none" stroke="#264755" stroke-width="1.7"/><path d="M6.6,7.8999999999999995 h9 v1 l-3.4,3.3 l3.4,3.4 v1 h-9 z" fill="#3c3f41"/><path d="M7.6,8.9 h7.2 l-3.5,3.4 l3.5,3.4 h-7.2 z" fill="#c79bf7"/></svg>
<span style="position:absolute;left:141.8px;top:244.75px;height:18.75px;line-height:18.75px;font-size:12px;color:#bbbbbb;white-space:pre;transform:scaleX(0.8602);transform-origin:0 50%;">User</span>
<svg style="position:absolute;left:125.0px;top:263.98px;" width="17" height="18" viewBox="0 0 17 18"><circle cx="7.3" cy="8" r="6.9" fill="#549746"/><path d="M5.3,4.6 h4 M7.3,4.6 v6.8 M5.3,11.4 h4" fill="none" stroke="#2c4a28" stroke-width="1.4"/><path d="M6.6,7.8999999999999995 h9 v1 l-3.4,3.3 l3.4,3.4 v1 h-9 z" fill="#3c3f41"/><path d="M7.6,8.9 h7.2 l-3.5,3.4 l3.5,3.4 h-7.2 z" fill="#c79bf7"/></svg>
<span style="position:absolute;left:141.8px;top:263.5px;height:18.75px;line-height:18.75px;font-size:12px;color:#bbbbbb;white-space:pre;transform:scaleX(0.8946);transform-origin:0 50%;">UserSearchRepository</span>
<svg style="position:absolute;left:90.25px;top:286.92px;" width="11" height="7" viewBox="0 0 11 7"><path d="M1,1 L5.2,4.8 L9.4,1" fill="none" stroke="#afb1b3" stroke-width="1.3"/></svg>
<svg style="position:absolute;left:108.25px;top:285.53px;" width="15" height="12" viewBox="0 0 15 12"><path d="M0,0 h5.2 l1.6,1.9 h6.8 v8.1 h-13.6 z" fill="#87939a"/><circle cx="4.9" cy="5.9" r="1.7" fill="#3c3f41"/></svg>
<span style="position:absolute;left:125.05px;top:282.25px;height:18.75px;line-height:18.75px;font-size:12px;color:#bbbbbb;white-space:pre;transform:scaleX(0.9310);transform-origin:0 50%;">infrastructure</span>
<svg style="position:absolute;left:125.0px;top:301.48px;" width="17" height="18" viewBox="0 0 17 18"><circle cx="7.3" cy="8" r="6.9" fill="#3d8aa5"/><path d="M10.2,6.3 A3.2,3.2 0 1 0 10.2,9.9" fill="none" stroke="#264755" stroke-width="1.7"/><path d="M6.6,7.8999999999999995 h9 v1 l-3.4,3.3 l3.4,3.4 v1 h-9 z" fill="#3c3f41"/><path d="M7.6,8.9 h7.2 l-3.5,3.4 l3.5,3.4 h-7.2 z" fill="#c79bf7"/></svg>
<span style="position:absolute;left:141.8px;top:301.0px;height:18.75px;line-height:18.75px;font-size:12px;color:#bbbbbb;white-space:pre;transform:scaleX(0.9617);transform-origin:0 50%;">TodoEntity</span>
<svg style="position:absolute;left:125.0px;top:320.23px;" width="17" height="18" viewBox="0 0 17 18"><circle cx="7.3" cy="8" r="6.9" fill="#549746"/><path d="M5.3,4.6 h4 M7.3,4.6 v6.8 M5.3,11.4 h4" fill="none" stroke="#2c4a28" stroke-width="1.4"/><path d="M6.6,7.8999999999999995 h9 v1 l-3.4,3.3 l3.4,3.4 v1 h-9 z" fill="#3c3f41"/><path d="M7.6,8.9 h7.2 l-3.5,3.4 l3.5,3.4 h-7.2 z" fill="#c79bf7"/></svg>
<span style="position:absolute;left:141.8px;top:319.75px;height:18.75px;line-height:18.75px;font-size:12px;color:#bbbbbb;white-space:pre;transform:scaleX(0.9581);transform-origin:0 50%;">TodoRepository</span>
<svg style="position:absolute;left:125.0px;top:338.98px;" width="17" height="18" viewBox="0 0 17 18"><circle cx="7.3" cy="8" r="6.9" fill="#3d8aa5"/><path d="M10.2,6.3 A3.2,3.2 0 1 0 10.2,9.9" fill="none" stroke="#264755" stroke-width="1.7"/><path d="M6.6,7.8999999999999995 h9 v1 l-3.4,3.3 l3.4,3.4 v1 h-9 z" fill="#3c3f41"/><path d="M7.6,8.9 h7.2 l-3.5,3.4 l3.5,3.4 h-7.2 z" fill="#c79bf7"/></svg>
<span style="position:absolute;left:141.8px;top:338.5px;height:18.75px;line-height:18.75px;font-size:12px;color:#bbbbbb;white-space:pre;transform:scaleX(0.9278);transform-origin:0 50%;">TodoSearchRepositoryImpl</span>
<svg style="position:absolute;left:125.0px;top:357.73px;" width="17" height="18" viewBox="0 0 17 18"><circle cx="7.3" cy="8" r="6.9" fill="#3d8aa5"/><path d="M10.2,6.3 A3.2,3.2 0 1 0 10.2,9.9" fill="none" stroke="#264755" stroke-width="1.7"/><path d="M6.6,7.8999999999999995 h9 v1 l-3.4,3.3 l3.4,3.4 v1 h-9 z" fill="#3c3f41"/><path d="M7.6,8.9 h7.2 l-3.5,3.4 l3.5,3.4 h-7.2 z" fill="#c79bf7"/></svg>
<span style="position:absolute;left:141.8px;top:357.25px;height:18.75px;line-height:18.75px;font-size:12px;color:#bbbbbb;white-space:pre;transform:scaleX(0.8924);transform-origin:0 50%;">UserEntity</span>
<svg style="position:absolute;left:125.0px;top:376.48px;" width="17" height="18" viewBox="0 0 17 18"><circle cx="7.3" cy="8" r="6.9" fill="#549746"/><path d="M5.3,4.6 h4 M7.3,4.6 v6.8 M5.3,11.4 h4" fill="none" stroke="#2c4a28" stroke-width="1.4"/><path d="M6.6,7.8999999999999995 h9 v1 l-3.4,3.3 l3.4,3.4 v1 h-9 z" fill="#3c3f41"/><path d="M7.6,8.9 h7.2 l-3.5,3.4 l3.5,3.4 h-7.2 z" fill="#c79bf7"/></svg>
<span style="position:absolute;left:141.8px;top:376.0px;height:18.75px;line-height:18.75px;font-size:12px;color:#bbbbbb;white-space:pre;transform:scaleX(0.9069);transform-origin:0 50%;">UserRepository</span>
<svg style="position:absolute;left:125.0px;top:395.23px;" width="17" height="18" viewBox="0 0 17 18"><circle cx="7.3" cy="8" r="6.9" fill="#3d8aa5"/><path d="M10.2,6.3 A3.2,3.2 0 1 0 10.2,9.9" fill="none" stroke="#264755" stroke-width="1.7"/><path d="M6.6,7.8999999999999995 h9 v1 l-3.4,3.3 l3.4,3.4 v1 h-9 z" fill="#3c3f41"/><path d="M7.6,8.9 h7.2 l-3.5,3.4 l3.5,3.4 h-7.2 z" fill="#c79bf7"/></svg>
<span style="position:absolute;left:141.8px;top:394.75px;height:18.75px;line-height:18.75px;font-size:12px;color:#bbbbbb;white-space:pre;transform:scaleX(0.9139);transform-origin:0 50%;">UserSearchRepositoryImpl</span>
<svg style="position:absolute;left:90.25px;top:418.18px;" width="11" height="7" viewBox="0 0 11 7"><path d="M1,1 L5.2,4.8 L9.4,1" fill="none" stroke="#afb1b3" stroke-width="1.3"/></svg>
<svg style="position:absolute;left:108.25px;top:416.78px;" width="15" height="12" viewBox="0 0 15 12"><path d="M0,0 h5.2 l1.6,1.9 h6.8 v8.1 h-13.6 z" fill="#87939a"/><circle cx="4.9" cy="5.9" r="1.7" fill="#3c3f41"/></svg>
<span style="position:absolute;left:125.05px;top:413.5px;height:18.75px;line-height:18.75px;font-size:12px;color:#bbbbbb;white-space:pre;transform:scaleX(0.9478);transform-origin:0 50%;">presentation</span>
<svg style="position:absolute;left:107.0px;top:436.92px;" width="11" height="7" viewBox="0 0 11 7"><path d="M1,1 L5.2,4.8 L9.4,1" fill="none" stroke="#afb1b3" stroke-width="1.3"/></svg>
<svg style="position:absolute;left:125.0px;top:435.53px;" width="15" height="12" viewBox="0 0 15 12"><path d="M0,0 h5.2 l1.6,1.9 h6.8 v8.1 h-13.6 z" fill="#87939a"/><circle cx="4.9" cy="5.9" r="1.7" fill="#3c3f41"/></svg>
<span style="position:absolute;left:141.8px;top:432.25px;height:18.75px;line-height:18.75px;font-size:12px;color:#bbbbbb;white-space:pre;transform:scaleX(0.9070);transform-origin:0 50%;">security</span>
<svg style="position:absolute;left:141.75px;top:451.48px;" width="17" height="18" viewBox="0 0 17 18"><circle cx="7.3" cy="8" r="6.9" fill="#3d8aa5"/><path d="M10.2,6.3 A3.2,3.2 0 1 0 10.2,9.9" fill="none" stroke="#264755" stroke-width="1.7"/><path d="M6.6,7.8999999999999995 h9 v1 l-3.4,3.3 l3.4,3.4 v1 h-9 z" fill="#3c3f41"/><path d="M7.6,8.9 h7.2 l-3.5,3.4 l3.5,3.4 h-7.2 z" fill="#c79bf7"/></svg>
<span style="position:absolute;left:158.55px;top:451.0px;height:18.75px;line-height:18.75px;font-size:12px;color:#bbbbbb;white-space:pre;transform:scaleX(0.8978);transform-origin:0 50%;">CorsFilter</span>
<svg style="position:absolute;left:141.75px;top:470.23px;" width="17" height="18" viewBox="0 0 17 18"><circle cx="7.3" cy="8" r="6.9" fill="#3d8aa5"/><path d="M10.2,6.3 A3.2,3.2 0 1 0 10.2,9.9" fill="none" stroke="#264755" stroke-width="1.7"/><path d="M6.6,7.8999999999999995 h9 v1 l-3.4,3.3 l3.4,3.4 v1 h-9 z" fill="#3c3f41"/><path d="M7.6,8.9 h7.2 l-3.5,3.4 l3.5,3.4 h-7.2 z" fill="#c79bf7"/></svg>
<span style="position:absolute;left:158.55px;top:469.75px;height:18.75px;line-height:18.75px;font-size:12px;color:#bbbbbb;white-space:pre;transform:scaleX(0.9343);transform-origin:0 50%;">SecurityConfiguration</span>
<svg style="position:absolute;left:125.0px;top:488.98px;" width="17" height="18" viewBox="0 0 17 18"><circle cx="7.3" cy="8" r="6.9" fill="#3d8aa5"/><path d="M10.2,6.3 A3.2,3.2 0 1 0 10.2,9.9" fill="none" stroke="#264755" stroke-width="1.7"/><path d="M6.6,7.8999999999999995 h9 v1 l-3.4,3.3 l3.4,3.4 v1 h-9 z" fill="#3c3f41"/><path d="M7.6,8.9 h7.2 l-3.5,3.4 l3.5,3.4 h-7.2 z" fill="#c79bf7"/></svg>
<span style="position:absolute;left:141.8px;top:488.5px;height:18.75px;line-height:18.75px;font-size:12px;color:#bbbbbb;white-space:pre;transform:scaleX(0.9699);transform-origin:0 50%;">TodoHandler</span>
<svg style="position:absolute;left:125.0px;top:507.73px;" width="17" height="18" viewBox="0 0 17 18"><circle cx="7.3" cy="8" r="6.9" fill="#3d8aa5"/><path d="M10.2,6.3 A3.2,3.2 0 1 0 10.2,9.9" fill="none" stroke="#264755" stroke-width="1.7"/><path d="M6.6,7.8999999999999995 h9 v1 l-3.4,3.3 l3.4,3.4 v1 h-9 z" fill="#3c3f41"/><path d="M7.6,8.9 h7.2 l-3.5,3.4 l3.5,3.4 h-7.2 z" fill="#c79bf7"/></svg>
<span style="position:absolute;left:141.8px;top:507.25px;height:18.75px;line-height:18.75px;font-size:12px;color:#bbbbbb;white-space:pre;transform:scaleX(0.9541);transform-origin:0 50%;">TodoRouterConfiguration</span>
<div style="position:absolute;left:0px;top:523.9px;width:271px;height:18.8px;background:#0d293e;"></div>
<svg style="position:absolute;left:125.0px;top:526.48px;" width="17" height="18" viewBox="0 0 17 18"><circle cx="7.3" cy="8" r="6.9" fill="#3d8aa5"/><path d="M10.2,6.3 A3.2,3.2 0 1 0 10.2,9.9" fill="none" stroke="#264755" stroke-width="1.7"/><path d="M6.6,7.8999999999999995 h9 v1 l-3.4,3.3 l3.4,3.4 v1 h-9 z" fill="#0d293e"/><path d="M7.6,8.9 h7.2 l-3.5,3.4 l3.5,3.4 h-7.2 z" fill="#c79bf7"/></svg>
<span style="position:absolute;left:141.8px;top:526.0px;height:18.75px;line-height:18.75px;font-size:12px;color:#bbbbbb;white-space:pre;transform:scaleX(0.9160);transform-origin:0 50%;">UserHandler</span>
<svg style="position:absolute;left:125.0px;top:545.23px;" width="17" height="18" viewBox="0 0 17 18"><circle cx="7.3" cy="8" r="6.9" fill="#3d8aa5"/><path d="M10.2,6.3 A3.2,3.2 0 1 0 10.2,9.9" fill="none" stroke="#264755" stroke-width="1.7"/><path d="M6.6,7.8999999999999995 h9 v1 l-3.4,3.3 l3.4,3.4 v1 h-9 z" fill="#3c3f41"/><path d="M7.6,8.9 h7.2 l-3.5,3.4 l3.5,3.4 h-7.2 z" fill="#c79bf7"/></svg>
<span style="position:absolute;left:141.8px;top:544.75px;height:18.75px;line-height:18.75px;font-size:12px;color:#bbbbbb;white-space:pre;transform:scaleX(0.9282);transform-origin:0 50%;">UserRouterConfiguration</span>
<svg style="position:absolute;left:109.75px;top:563.18px;" width="15" height="17" viewBox="0 0 15 17"><path d="M0,4.6 L4.2,0.4 V4.6 z" fill="#98a3aa"/><path d="M5.3,0.4 H9.4 V13.6 H0 V5.7 H5.3 z" fill="#98a3aa"/><path d="M6.5,1.6 v5" stroke="#3c3f41" stroke-width="0"/><path d="M4.4,6.7 h9 v1 l-3.4,3.3 l3.4,3.4 v1 h-9 z" fill="#3c3f41"/><path d="M5.4,7.7 h7.2 l-3.5,3.4 l3.5,3.4 h-7.2 z" fill="#c79bf7"/></svg>
<span style="position:absolute;left:125.05px;top:563.5px;height:18.75px;line-height:18.75px;font-size:12px;color:#bbbbbb;white-space:pre;transform:scaleX(0.9466);transform-origin:0 50%;">TrainingSpringBootNuxtAppApplication</span>
<svg style="position:absolute;left:56.75px;top:586.92px;" width="11" height="7" viewBox="0 0 11 7"><path d="M1,1 L5.2,4.8 L9.4,1" fill="none" stroke="#afb1b3" stroke-width="1.3"/></svg>
<svg style="position:absolute;left:75.05px;top:584.33px;" width="16" height="15" viewBox="0 0 16 15"><path d="M0,0 h5.2 l1.6,1.9 h6.8 v8.1 h-13.6 z" fill="#87939a"/><rect x="7.4" y="5" width="7.8" height="9.2" fill="#3c3f41"/><path d="M8.4,6.7 h6.2 M8.4,9.1 h6.2 M8.4,11.5 h6.2 M8.4,13.4 h6.2" stroke="#c9a04a" stroke-width="1.5"/></svg>
<span style="position:absolute;left:91.55px;top:582.25px;height:18.75px;line-height:18.75px;font-size:12px;color:#bbbbbb;white-space:pre;transform:scaleX(0.8807);transform-origin:0 50%;">resources</span>
<svg style="position:absolute;left:92.1px;top:603.58px;" width="16" height="16" viewBox="0 0 16 16"><path d="M0.5,8.4 C0.5,4.5 4,3.6 8,3.6 C10,3.6 11.6,2.4 12.8,0.6 C14.2,5 12.7,11 6.5,11 C3.5,11 2,10.4 0.5,8.4 z" fill="#62a84d"/><path d="M10.2,4.4 L13.8,6.4 V10.6 L10.2,12.8 L6.6,10.6 V6.4 z" fill="#3c3f41" transform="translate(0,0.2) scale(1.12) translate(-1.1,-1)"/><path d="M10.2,5.2 L13.2,6.9 V10.3 L10.2,12 L7.2,10.3 V6.9 z" fill="#b4bcc2"/><circle cx="10.2" cy="8.6" r="1.7" fill="#3c3f41"/><circle cx="10.2" cy="8.6" r="0.7" fill="#b4bcc2"/></svg>
<span style="position:absolute;left:108.3px;top:601.0px;height:18.75px;line-height:18.75px;font-size:12px;color:#bbbbbb;white-space:pre;transform:scaleX(0.9599);transform-origin:0 50%;">application.properties</span>
<svg style="position:absolute;left:92.3px;top:619.83px;" width="16" height="16" viewBox="0 0 16 16"><path d="M2.2,3.8 L5.4,0.6 V3.8 z" fill="#98a3aa"/><path d="M6.4,0.6 H11.4 V6.8 H2.2 V4.8 H6.4 z" fill="#98a3aa"/><rect x="0" y="7.8" width="14.2" height="6.8" fill="#e0a834"/><text x="7.1" y="13.5" font-family="'Liberation Sans',sans-serif" font-size="6.2" font-weight="bold" fill="#4a3a14" text-anchor="middle" textLength="11.8" lengthAdjust="spacingAndGlyphs">SQL</text></svg>
<span style="position:absolute;left:108.3px;top:619.75px;height:18.75px;line-height:18.75px;font-size:12px;color:#bbbbbb;white-space:pre;transform:scaleX(0.9017);transform-origin:0 50%;">data.sql</span>
<svg style="position:absolute;left:92.3px;top:638.58px;" width="16" height="16" viewBox="0 0 16 16"><path d="M2.2,3.8 L5.4,0.6 V3.8 z" fill="#98a3aa"/><path d="M6.4,0.6 H11.4 V6.8 H2.2 V4.8 H6.4 z" fill="#98a3aa"/><rect x="0" y="7.8" width="14.2" height="6.8" fill="#e0a834"/><text x="7.1" y="13.5" font-family="'Liberation Sans',sans-serif" font-size="6.2" font-weight="bold" fill="#4a3a14" text-anchor="middle" textLength="11.8" lengthAdjust="spacingAndGlyphs">SQL</text></svg>
<span style="position:absolute;left:108.3px;top:638.5px;height:18.75px;line-height:18.75px;font-size:12px;color:#bbbbbb;white-space:pre;transform:scaleX(0.8813);transform-origin:0 50%;">schema.sql</span>
<div style="position:absolute;left:261px;top:74.5px;width:7px;height:428px;background:rgba(166,166,166,0.28);"></div>
<div style="position:absolute;left:0px;top:643.3px;width:195px;height:7.2px;background:rgba(166,166,166,0.28);"></div>
</div>
<div style="position:absolute;left:290px;top:54px;width:1130px;height:26px;background:#3c3f41;"></div>
<div style="position:absolute;left:290px;top:79px;width:1130px;height:1px;background:#323232;"></div>
<span style="position:absolute;left:291.6px;top:54px;height:26px;line-height:26px;font-size:12px;color:#bbbbbb;white-space:pre;transform:scaleX(0.9536);transform-origin:0 50%;">oryImpl.kt</span>
<svg style="position:absolute;left:348.3px;top:64.0px;" width="7" height="7" viewBox="0 0 7 7"><path d="M0.3,0.3 L6.7,6.7 M6.7,0.3 L0.3,6.7" stroke="#6b6d6f" stroke-width="1"/></svg>
<div style="position:absolute;left:1043.6px;top:54px;width:121px;height:25px;background:#4e5254;"></div>
<div style="position:absolute;left:1043.6px;top:76.2px;width:121px;height:3px;background:#4a88c7;"></div>
<svg style="position:absolute;left:371px;top:59.3px;" width="17" height="18" viewBox="0 0 17 18"><circle cx="7.3" cy="8" r="6.9" fill="#3d8aa5"/><path d="M10.2,6.3 A3.2,3.2 0 1 0 10.2,9.9" fill="none" stroke="#264755" stroke-width="1.7"/><path d="M6.6,7.8999999999999995 h9 v1 l-3.4,3.3 l3.4,3.4 v1 h-9 z" fill="#3c3f41"/><path d="M7.6,8.9 h7.2 l-3.5,3.4 l3.5,3.4 h-7.2 z" fill="#c79bf7"/></svg>
<span style="position:absolute;left:388px;top:54px;height:26px;line-height:26px;font-size:12px;color:#bbbbbb;white-space:pre;transform:scaleX(0.9099);transform-origin:0 50%;">UserSearchRepositoryImpl.kt</span>
<svg style="position:absolute;left:538.0px;top:64.0px;" width="7" height="7" viewBox="0 0 7 7"><path d="M0.3,0.3 L6.7,6.7 M6.7,0.3 L0.3,6.7" stroke="#6b6d6f" stroke-width="1"/></svg>
<svg style="position:absolute;left:559px;top:59.3px;" width="17" height="18" viewBox="0 0 17 18"><circle cx="7.3" cy="8" r="6.9" fill="#3d8aa5"/><path d="M10.2,6.3 A3.2,3.2 0 1 0 10.2,9.9" fill="none" stroke="#264755" stroke-width="1.7"/><path d="M6.6,7.8999999999999995 h9 v1 l-3.4,3.3 l3.4,3.4 v1 h-9 z" fill="#3c3f41"/><path d="M7.6,8.9 h7.2 l-3.5,3.4 l3.5,3.4 h-7.2 z" fill="#c79bf7"/></svg>
<span style="position:absolute;left:577px;top:54px;height:26px;line-height:26px;font-size:12px;color:#bbbbbb;white-space:pre;transform:scaleX(0.9514);transform-origin:0 50%;">TodoRouterConfiguration.kt</span>
<svg style="position:absolute;left:724.0px;top:64.0px;" width="7" height="7" viewBox="0 0 7 7"><path d="M0.3,0.3 L6.7,6.7 M6.7,0.3 L0.3,6.7" stroke="#6b6d6f" stroke-width="1"/></svg>
<svg style="position:absolute;left:746px;top:59.3px;" width="17" height="18" viewBox="0 0 17 18"><circle cx="7.3" cy="8" r="6.9" fill="#3d8aa5"/><path d="M10.2,6.3 A3.2,3.2 0 1 0 10.2,9.9" fill="none" stroke="#264755" stroke-width="1.7"/><path d="M6.6,7.8999999999999995 h9 v1 l-3.4,3.3 l3.4,3.4 v1 h-9 z" fill="#3c3f41"/><path d="M7.6,8.9 h7.2 l-3.5,3.4 l3.5,3.4 h-7.2 z" fill="#c79bf7"/></svg>
<span style="position:absolute;left:763px;top:54px;height:26px;line-height:26px;font-size:12px;color:#bbbbbb;white-space:pre;transform:scaleX(0.9742);transform-origin:0 50%;">TodoHandler.kt</span>
<svg style="position:absolute;left:849.0px;top:64.0px;" width="7" height="7" viewBox="0 0 7 7"><path d="M0.3,0.3 L6.7,6.7 M6.7,0.3 L0.3,6.7" stroke="#6b6d6f" stroke-width="1"/></svg>
<svg style="position:absolute;left:870px;top:59.3px;" width="17" height="18" viewBox="0 0 17 18"><circle cx="7.3" cy="8" r="6.9" fill="#3d8aa5"/><path d="M10.2,6.3 A3.2,3.2 0 1 0 10.2,9.9" fill="none" stroke="#264755" stroke-width="1.7"/><path d="M6.6,7.8999999999999995 h9 v1 l-3.4,3.3 l3.4,3.4 v1 h-9 z" fill="#3c3f41"/><path d="M7.6,8.9 h7.2 l-3.5,3.4 l3.5,3.4 h-7.2 z" fill="#c79bf7"/></svg>
<span style="position:absolute;left:887px;top:54px;height:26px;line-height:26px;font-size:12px;color:#bbbbbb;white-space:pre;transform:scaleX(0.9284);transform-origin:0 50%;">UserRouterConfiguration.kt</span>
<svg style="position:absolute;left:1030.0px;top:64.0px;" width="7" height="7" viewBox="0 0 7 7"><path d="M0.3,0.3 L6.7,6.7 M6.7,0.3 L0.3,6.7" stroke="#6b6d6f" stroke-width="1"/></svg>
<svg style="position:absolute;left:1052px;top:59.3px;" width="17" height="18" viewBox="0 0 17 18"><circle cx="7.3" cy="8" r="6.9" fill="#3d8aa5"/><path d="M10.2,6.3 A3.2,3.2 0 1 0 10.2,9.9" fill="none" stroke="#264755" stroke-width="1.7"/><path d="M6.6,7.8999999999999995 h9 v1 l-3.4,3.3 l3.4,3.4 v1 h-9 z" fill="#3c3f41"/><path d="M7.6,8.9 h7.2 l-3.5,3.4 l3.5,3.4 h-7.2 z" fill="#c79bf7"/></svg>
<span style="position:absolute;left:1069px;top:54px;height:26px;line-height:26px;font-size:12px;color:#bbbbbb;white-space:pre;transform:scaleX(0.9323);transform-origin:0 50%;">UserHandler.kt</span>
<svg style="position:absolute;left:1150.5px;top:64.0px;" width="7" height="7" viewBox="0 0 7 7"><path d="M0.3,0.3 L6.7,6.7 M6.7,0.3 L0.3,6.7" stroke="#6b6d6f" stroke-width="1"/></svg>
<svg style="position:absolute;left:1172px;top:59.3px;" width="17" height="18" viewBox="0 0 17 18"><circle cx="7.3" cy="8" r="6.9" fill="#3d8aa5"/><path d="M10.2,6.3 A3.2,3.2 0 1 0 10.2,9.9" fill="none" stroke="#264755" stroke-width="1.7"/><path d="M6.6,7.8999999999999995 h9 v1 l-3.4,3.3 l3.4,3.4 v1 h-9 z" fill="#3c3f41"/><path d="M7.6,8.9 h7.2 l-3.5,3.4 l3.5,3.4 h-7.2 z" fill="#c79bf7"/></svg>
<span style="position:absolute;left:1189px;top:54px;height:26px;line-height:26px;font-size:12px;color:#bbbbbb;white-space:pre;transform:scaleX(0.9340);transform-origin:0 50%;">SecurityConfiguration.kt</span>
<svg style="position:absolute;left:1316.0px;top:64.0px;" width="7" height="7" viewBox="0 0 7 7"><path d="M0.3,0.3 L6.7,6.7 M6.7,0.3 L0.3,6.7" stroke="#6b6d6f" stroke-width="1"/></svg>
<svg style="position:absolute;left:1338px;top:60.4px;" width="16" height="16" viewBox="0 0 16 16"><path d="M0.5,8.4 C0.5,4.5 4,3.6 8,3.6 C10,3.6 11.6,2.4 12.8,0.6 C14.2,5 12.7,11 6.5,11 C3.5,11 2,10.4 0.5,8.4 z" fill="#62a84d"/><path d="M10.4,4.2 L14.6,6.6 V11.4 L10.4,13.8 L6.2,11.4 V6.6 z" fill="#3c3f41"/><path d="M10.4,5.4 L13.5,7.2 V10.8 L10.4,12.6 L7.3,10.8 V7.2 z" fill="#b4bcc2"/><circle cx="10.4" cy="9" r="1.8" fill="#3c3f41"/><circle cx="10.4" cy="9" r="0.75" fill="#b4bcc2"/></svg>
<span style="position:absolute;left:1355px;top:54px;height:26px;line-height:26px;font-size:12px;color:#9a9c9e;white-space:pre;transform:scaleX(0.8608);transform-origin:0 50%;">ap</span>
<div style="position:absolute;left:1358px;top:55px;width:14px;height:23px;background:linear-gradient(90deg,rgba(60,63,65,0),rgba(60,63,65,1))"></div>
<svg style="position:absolute;left:1377.2px;top:62.8px;" width="12" height="8" viewBox="0 0 12 8"><path d="M1,1 L5.8,5.8 L10.6,1" fill="none" stroke="#c3c5c7" stroke-width="1.6"/></svg>
<svg style="position:absolute;left:1407px;top:60px;" width="5" height="13" viewBox="0 0 5 13"><circle cx="2.3" cy="2.3" r="1.55" fill="#c3c5c7"/><circle cx="2.3" cy="6.55" r="1.55" fill="#c3c5c7"/><circle cx="2.3" cy="10.8" r="1.55" fill="#c3c5c7"/></svg>
<div style="position:absolute;left:0;top:80px;width:1420px;height:652px;overflow:hidden">
<div style="position:absolute;left:290px;top:0px;width:1130px;height:652px;background:#2b2b2b;"></div>
<div style="position:absolute;left:290px;top:0px;width:68.5px;height:652px;background:#313335;"></div>
<div style="position:absolute;left:290px;top:0px;width:0.6px;height:652px;background:#2b2b2b;"></div>
<div style="position:absolute;left:290px;top:185.5px;width:1130px;height:20.4px;background:#323232;"></div>
<div style="position:absolute;left:1264.3px;top:0px;width:1.2px;height:652px;background:#424242;"></div>
<div style="position:absolute;left:358.3px;top:0px;width:1.3px;height:652px;background:#4e5052;"></div>
<div style="position:absolute;left:348.9px;top:123.1px;width:2.2px;height:82.4px;background:#4a6862;"></div>
<div style="position:absolute;left:394.5px;top:144.1px;width:1px;height:41.2px;background:#393b3c;"></div>
<div style="position:absolute;left:424.5px;top:164.7px;width:1px;height:20.6px;background:#393b3c;"></div>
<div style="position:absolute;left:394.5px;top:247.1px;width:1px;height:206.0px;background:#393b3c;"></div>
<div style="position:absolute;left:424.5px;top:288.3px;width:1px;height:61.8px;background:#393b3c;"></div>
<div style="position:absolute;left:454.5px;top:329.5px;width:1px;height:20.6px;background:#393b3c;"></div>
<div style="position:absolute;left:424.5px;top:370.7px;width:1px;height:61.8px;background:#393b3c;"></div>
<div style="position:absolute;left:454.5px;top:391.3px;width:1px;height:20.6px;background:#393b3c;"></div>
<div style="position:absolute;left:394.5px;top:514.9px;width:1px;height:82.4px;background:#393b3c;"></div>
<div style="position:absolute;left:424.5px;top:576.7px;width:1px;height:20.6px;background:#393b3c;"></div>
<div style="position:absolute;left:867.5px;top:123.1px;width:7.5px;height:20.8px;background:#3b514d;"></div>
<div style="position:absolute;left:395.0px;top:185.1px;width:7.5px;height:20.6px;background:#3b514d;"></div>
<span style="position:absolute;left:270px;width:39px;text-align:right;top:2.00px;height:20.6px;line-height:20.6px;font-family:'Liberation Mono','Noto Sans CJK JP',monospace;font-size:13.2px;color:#606366;white-space:pre;transform:scaleX(0.87);transform-origin:100% 50%;">2</span>
<span style="position:absolute;left:270px;width:39px;text-align:right;top:22.60px;height:20.6px;line-height:20.6px;font-family:'Liberation Mono','Noto Sans CJK JP',monospace;font-size:13.2px;color:#606366;white-space:pre;transform:scaleX(0.87);transform-origin:100% 50%;">3</span>
<span style="position:absolute;left:270px;width:39px;text-align:right;top:43.20px;height:20.6px;line-height:20.6px;font-family:'Liberation Mono','Noto Sans CJK JP',monospace;font-size:13.2px;color:#606366;white-space:pre;transform:scaleX(0.87);transform-origin:100% 50%;">15</span>
<span style="position:absolute;left:270px;width:39px;text-align:right;top:63.80px;height:20.6px;line-height:20.6px;font-family:'Liberation Mono','Noto Sans CJK JP',monospace;font-size:13.2px;color:#606366;white-space:pre;transform:scaleX(0.87);transform-origin:100% 50%;">16</span>
<span style="position:absolute;left:270px;width:39px;text-align:right;top:84.40px;height:20.6px;line-height:20.6px;font-family:'Liberation Mono','Noto Sans CJK JP',monospace;font-size:13.2px;color:#606366;white-space:pre;transform:scaleX(0.87);transform-origin:100% 50%;">17</span>
<span style="position:absolute;left:270px;width:39px;text-align:right;top:105.00px;height:20.6px;line-height:20.6px;font-family:'Liberation Mono','Noto Sans CJK JP',monospace;font-size:13.2px;color:#606366;white-space:pre;transform:scaleX(0.87);transform-origin:100% 50%;">18</span>
<span style="position:absolute;left:270px;width:39px;text-align:right;top:125.60px;height:20.6px;line-height:20.6px;font-family:'Liberation Mono','Noto Sans CJK JP',monospace;font-size:13.2px;color:#606366;white-space:pre;transform:scaleX(0.87);transform-origin:100% 50%;">19</span>
<span style="position:absolute;left:270px;width:39px;text-align:right;top:146.20px;height:20.6px;line-height:20.6px;font-family:'Liberation Mono','Noto Sans CJK JP',monospace;font-size:13.2px;color:#606366;white-space:pre;transform:scaleX(0.87);transform-origin:100% 50%;">20</span>
<span style="position:absolute;left:270px;width:39px;text-align:right;top:166.80px;height:20.6px;line-height:20.6px;font-family:'Liberation Mono','Noto Sans CJK JP',monospace;font-size:13.2px;color:#606366;white-space:pre;transform:scaleX(0.87);transform-origin:100% 50%;">21</span>
<span style="position:absolute;left:270px;width:39px;text-align:right;top:187.40px;height:20.6px;line-height:20.6px;font-family:'Liberation Mono','Noto Sans CJK JP',monospace;font-size:13.2px;color:#a4a3a3;white-space:pre;transform:scaleX(0.87);transform-origin:100% 50%;">22</span>
<span style="position:absolute;left:270px;width:39px;text-align:right;top:208.00px;height:20.6px;line-height:20.6px;font-family:'Liberation Mono','Noto Sans CJK JP',monospace;font-size:13.2px;color:#606366;white-space:pre;transform:scaleX(0.87);transform-origin:100% 50%;">23</span>
<span style="position:absolute;left:270px;width:39px;text-align:right;top:228.60px;height:20.6px;line-height:20.6px;font-family:'Liberation Mono','Noto Sans CJK JP',monospace;font-size:13.2px;color:#606366;white-space:pre;transform:scaleX(0.87);transform-origin:100% 50%;">24</span>
<span style="position:absolute;left:270px;width:39px;text-align:right;top:249.20px;height:20.6px;line-height:20.6px;font-family:'Liberation Mono','Noto Sans CJK JP',monospace;font-size:13.2px;color:#606366;white-space:pre;transform:scaleX(0.87);transform-origin:100% 50%;">25</span>
<span style="position:absolute;left:270px;width:39px;text-align:right;top:269.80px;height:20.6px;line-height:20.6px;font-family:'Liberation Mono','Noto Sans CJK JP',monospace;font-size:13.2px;color:#606366;white-space:pre;transform:scaleX(0.87);transform-origin:100% 50%;">26</span>
<span style="position:absolute;left:270px;width:39px;text-align:right;top:290.40px;height:20.6px;line-height:20.6px;font-family:'Liberation Mono','Noto Sans CJK JP',monospace;font-size:13.2px;color:#606366;white-space:pre;transform:scaleX(0.87);transform-origin:100% 50%;">27</span>
<span style="position:absolute;left:270px;width:39px;text-align:right;top:311.00px;height:20.6px;line-height:20.6px;font-family:'Liberation Mono','Noto Sans CJK JP',monospace;font-size:13.2px;color:#606366;white-space:pre;transform:scaleX(0.87);transform-origin:100% 50%;">28</span>
<span style="position:absolute;left:270px;width:39px;text-align:right;top:331.60px;height:20.6px;line-height:20.6px;font-family:'Liberation Mono','Noto Sans CJK JP',monospace;font-size:13.2px;color:#606366;white-space:pre;transform:scaleX(0.87);transform-origin:100% 50%;">29</span>
<span style="position:absolute;left:270px;width:39px;text-align:right;top:352.20px;height:20.6px;line-height:20.6px;font-family:'Liberation Mono','Noto Sans CJK JP',monospace;font-size:13.2px;color:#606366;white-space:pre;transform:scaleX(0.87);transform-origin:100% 50%;">30</span>
<span style="position:absolute;left:270px;width:39px;text-align:right;top:372.80px;height:20.6px;line-height:20.6px;font-family:'Liberation Mono','Noto Sans CJK JP',monospace;font-size:13.2px;color:#606366;white-space:pre;transform:scaleX(0.87);transform-origin:100% 50%;">31</span>
<span style="position:absolute;left:270px;width:39px;text-align:right;top:393.40px;height:20.6px;line-height:20.6px;font-family:'Liberation Mono','Noto Sans CJK JP',monospace;font-size:13.2px;color:#606366;white-space:pre;transform:scaleX(0.87);transform-origin:100% 50%;">32</span>
<span style="position:absolute;left:270px;width:39px;text-align:right;top:414.00px;height:20.6px;line-height:20.6px;font-family:'Liberation Mono','Noto Sans CJK JP',monospace;font-size:13.2px;color:#606366;white-space:pre;transform:scaleX(0.87);transform-origin:100% 50%;">33</span>
<span style="position:absolute;left:270px;width:39px;text-align:right;top:434.60px;height:20.6px;line-height:20.6px;font-family:'Liberation Mono','Noto Sans CJK JP',monospace;font-size:13.2px;color:#606366;white-space:pre;transform:scaleX(0.87);transform-origin:100% 50%;">34</span>
<span style="position:absolute;left:270px;width:39px;text-align:right;top:455.20px;height:20.6px;line-height:20.6px;font-family:'Liberation Mono','Noto Sans CJK JP',monospace;font-size:13.2px;color:#606366;white-space:pre;transform:scaleX(0.87);transform-origin:100% 50%;">35</span>
<span style="position:absolute;left:270px;width:39px;text-align:right;top:475.80px;height:20.6px;line-height:20.6px;font-family:'Liberation Mono','Noto Sans CJK JP',monospace;font-size:13.2px;color:#606366;white-space:pre;transform:scaleX(0.87);transform-origin:100% 50%;">36</span>
<span style="position:absolute;left:270px;width:39px;text-align:right;top:496.40px;height:20.6px;line-height:20.6px;font-family:'Liberation Mono','Noto Sans CJK JP',monospace;font-size:13.2px;color:#606366;white-space:pre;transform:scaleX(0.87);transform-origin:100% 50%;">37</span>
<span style="position:absolute;left:270px;width:39px;text-align:right;top:517.00px;height:20.6px;line-height:20.6px;font-family:'Liberation Mono','Noto Sans CJK JP',monospace;font-size:13.2px;color:#606366;white-space:pre;transform:scaleX(0.87);transform-origin:100% 50%;">38</span>
<span style="position:absolute;left:270px;width:39px;text-align:right;top:537.60px;height:20.6px;line-height:20.6px;font-family:'Liberation Mono','Noto Sans CJK JP',monospace;font-size:13.2px;color:#606366;white-space:pre;transform:scaleX(0.87);transform-origin:100% 50%;">39</span>
<span style="position:absolute;left:270px;width:39px;text-align:right;top:558.20px;height:20.6px;line-height:20.6px;font-family:'Liberation Mono','Noto Sans CJK JP',monospace;font-size:13.2px;color:#606366;white-space:pre;transform:scaleX(0.87);transform-origin:100% 50%;">40</span>
<span style="position:absolute;left:270px;width:39px;text-align:right;top:578.80px;height:20.6px;line-height:20.6px;font-family:'Liberation Mono','Noto Sans CJK JP',monospace;font-size:13.2px;color:#606366;white-space:pre;transform:scaleX(0.87);transform-origin:100% 50%;">41</span>
<span style="position:absolute;left:270px;width:39px;text-align:right;top:599.40px;height:20.6px;line-height:20.6px;font-family:'Liberation Mono','Noto Sans CJK JP',monospace;font-size:13.2px;color:#606366;white-space:pre;transform:scaleX(0.87);transform-origin:100% 50%;">42</span>
<span style="position:absolute;left:270px;width:39px;text-align:right;top:620.00px;height:20.6px;line-height:20.6px;font-family:'Liberation Mono','Noto Sans CJK JP',monospace;font-size:13.2px;color:#606366;white-space:pre;transform:scaleX(0.87);transform-origin:100% 50%;">43</span>
<span style="position:absolute;left:270px;width:39px;text-align:right;top:640.60px;height:20.6px;line-height:20.6px;font-family:'Liberation Mono','Noto Sans CJK JP',monospace;font-size:13.2px;color:#606366;white-space:pre;transform:scaleX(0.87);transform-origin:100% 50%;">44</span>
<svg style="position:absolute;left:314.7px;top:85.0px;" width="16" height="15" viewBox="0 0 16 15"><circle cx="6.5" cy="6.5" r="6.5" fill="#5aa648"/><path d="M2.2,1.8 L7.4,7.2" stroke="#313335" stroke-width="1.2" fill="none"/><path d="M3.2,11.6 C1.6,9 1.8,5.6 3.6,3.4" stroke="#313335" stroke-width="0" fill="none"/><path d="M4.8,5 C3.6,7.6 3.8,10.2 5.2,12.6" stroke="#313335" stroke-width="1.1" fill="none"/><circle cx="9.5" cy="9.6" r="4.6" fill="#313335"/><circle cx="9.5" cy="9.6" r="3.8" fill="#3a9fd0"/><path d="M11.2,8.6 A2,2 0 1 0 11.2,10.8" fill="none" stroke="#2b5f7e" stroke-width="1.1"/><path d="M8.8,11.2 h6 l-3,3.2 z" fill="#313335"/><path d="M9.8,11.6 h4.2 l-2.1,2.4 z" fill="#d5d7d9"/></svg>
<svg style="position:absolute;left:331.8px;top:85.0px;" width="16" height="15" viewBox="0 0 16 15"><circle cx="6.5" cy="6.5" r="6.5" fill="#5aa648"/><path d="M2.2,1.8 L7.4,7.2" stroke="#313335" stroke-width="1.2" fill="none"/><path d="M3.2,11.6 C1.6,9 1.8,5.6 3.6,3.4" stroke="#313335" stroke-width="0" fill="none"/><path d="M4.8,5 C3.6,7.6 3.8,10.2 5.2,12.6" stroke="#313335" stroke-width="1.1" fill="none"/><path d="M5,7.6 h9.8 v6 h-9.8 z" fill="#313335"/><path d="M6,10.6 h5" stroke="#c6ccd2" stroke-width="1.8"/><path d="M9.8,7.8 L13.8,10.6 L9.8,13.4 z" fill="#c6ccd2"/></svg>
<svg style="position:absolute;left:331px;top:167.5px;" width="15" height="15" viewBox="0 0 15 15"><path d="M0.5,7.5 H10" stroke="#d2d4d6" stroke-width="2.4"/><path d="M7.9,3.3 L14.4,7.5 L7.9,11.7 z" fill="#cfd1d3"/><path d="M6.3,0.7 C4.6,2.6 4.1,4.6 5.4,6.6 C6.7,8.5 8.3,10.6 6.0,14.3" fill="none" stroke="#313335" stroke-width="2.8"/><path d="M6.3,0.7 C4.6,2.6 4.1,4.6 5.4,6.6 C6.7,8.5 8.3,10.6 6.0,14.3" fill="none" stroke="#3fa84f" stroke-width="1.6" stroke-linecap="round"/></svg>
<svg style="position:absolute;left:331px;top:332.3px;" width="15" height="15" viewBox="0 0 15 15"><path d="M0.5,7.5 H10" stroke="#d2d4d6" stroke-width="2.4"/><path d="M7.9,3.3 L14.4,7.5 L7.9,11.7 z" fill="#cfd1d3"/><path d="M6.3,0.7 C4.6,2.6 4.1,4.6 5.4,6.6 C6.7,8.5 8.3,10.6 6.0,14.3" fill="none" stroke="#313335" stroke-width="2.8"/><path d="M6.3,0.7 C4.6,2.6 4.1,4.6 5.4,6.6 C6.7,8.5 8.3,10.6 6.0,14.3" fill="none" stroke="#3fa84f" stroke-width="1.6" stroke-linecap="round"/></svg>
<svg style="position:absolute;left:331px;top:517.7px;" width="15" height="15" viewBox="0 0 15 15"><path d="M0.5,7.5 H10" stroke="#d2d4d6" stroke-width="2.4"/><path d="M7.9,3.3 L14.4,7.5 L7.9,11.7 z" fill="#cfd1d3"/><path d="M6.3,0.7 C4.6,2.6 4.1,4.6 5.4,6.6 C6.7,8.5 8.3,10.6 6.0,14.3" fill="none" stroke="#313335" stroke-width="2.8"/><path d="M6.3,0.7 C4.6,2.6 4.1,4.6 5.4,6.6 C6.7,8.5 8.3,10.6 6.0,14.3" fill="none" stroke="#3fa84f" stroke-width="1.6" stroke-linecap="round"/></svg>
<svg style="position:absolute;left:331px;top:579.5px;" width="15" height="15" viewBox="0 0 15 15"><path d="M0.5,7.5 H10" stroke="#d2d4d6" stroke-width="2.4"/><path d="M7.9,3.3 L14.4,7.5 L7.9,11.7 z" fill="#cfd1d3"/><path d="M6.3,0.7 C4.6,2.6 4.1,4.6 5.4,6.6 C6.7,8.5 8.3,10.6 6.0,14.3" fill="none" stroke="#313335" stroke-width="2.8"/><path d="M6.3,0.7 C4.6,2.6 4.1,4.6 5.4,6.6 C6.7,8.5 8.3,10.6 6.0,14.3" fill="none" stroke="#3fa84f" stroke-width="1.6" stroke-linecap="round"/></svg>
<svg style="position:absolute;left:354.3px;top:26.2px;" width="10" height="10" viewBox="0 0 10 10"><rect x="0.6" y="0.6" width="8.2" height="8.2" fill="#2f3133" stroke="#585a5d" stroke-width="1.2"/><path d="M2.2,4.7 h5 M4.7,2.2 v5" stroke="#585a5d" stroke-width="1.2"/></svg>
<svg style="position:absolute;left:354.1px;top:88.9px;" width="10" height="13" viewBox="0 0 10 13"><path d="M0.7,0.7 h8.2 v5.8 l-4.1,4.9 l-4.1,-4.9 z" fill="#2f3133" stroke="#585a5d" stroke-width="1.2"/><path d="M2.2,4 h5.2" stroke="#585a5d" stroke-width="1.2"/></svg>
<svg style="position:absolute;left:354.1px;top:130.1px;" width="10" height="13" viewBox="0 0 10 13"><path d="M0.7,0.7 h8.2 v5.8 l-4.1,4.9 l-4.1,-4.9 z" fill="#2f3133" stroke="#585a5d" stroke-width="1.2"/><path d="M2.2,4 h5.2" stroke="#585a5d" stroke-width="1.2"/></svg>
<svg style="position:absolute;left:354.1px;top:233.1px;" width="10" height="13" viewBox="0 0 10 13"><path d="M0.7,0.7 h8.2 v5.8 l-4.1,4.9 l-4.1,-4.9 z" fill="#2f3133" stroke="#585a5d" stroke-width="1.2"/><path d="M2.2,4 h5.2" stroke="#585a5d" stroke-width="1.2"/></svg>
<svg style="position:absolute;left:354.1px;top:274.3px;" width="10" height="13" viewBox="0 0 10 13"><path d="M0.7,0.7 h8.2 v5.8 l-4.1,4.9 l-4.1,-4.9 z" fill="#2f3133" stroke="#585a5d" stroke-width="1.2"/><path d="M2.2,4 h5.2" stroke="#585a5d" stroke-width="1.2"/></svg>
<svg style="position:absolute;left:354.1px;top:500.9px;" width="10" height="13" viewBox="0 0 10 13"><path d="M0.7,0.7 h8.2 v5.8 l-4.1,4.9 l-4.1,-4.9 z" fill="#2f3133" stroke="#585a5d" stroke-width="1.2"/><path d="M2.2,4 h5.2" stroke="#585a5d" stroke-width="1.2"/></svg>
<svg style="position:absolute;left:354.1px;top:645.1px;" width="10" height="13" viewBox="0 0 10 13"><path d="M0.7,0.7 h8.2 v5.8 l-4.1,4.9 l-4.1,-4.9 z" fill="#2f3133" stroke="#585a5d" stroke-width="1.2"/><path d="M2.2,4 h5.2" stroke="#585a5d" stroke-width="1.2"/></svg>
<svg style="position:absolute;left:354.1px;top:188.4px;" width="10" height="13" viewBox="0 0 10 13"><path d="M0.7,12.1 h8.2 v-5.8 l-4.1,-4.9 l-4.1,4.9 z" fill="#2f3133" stroke="#585a5d" stroke-width="1.2"/><path d="M2.2,8.8 h5.2" stroke="#585a5d" stroke-width="1.2"/></svg>
<svg style="position:absolute;left:354.1px;top:353.2px;" width="10" height="13" viewBox="0 0 10 13"><path d="M0.7,12.1 h8.2 v-5.8 l-4.1,-4.9 l-4.1,4.9 z" fill="#2f3133" stroke="#585a5d" stroke-width="1.2"/><path d="M2.2,8.8 h5.2" stroke="#585a5d" stroke-width="1.2"/></svg>
<svg style="position:absolute;left:354.1px;top:435.6px;" width="10" height="13" viewBox="0 0 10 13"><path d="M0.7,12.1 h8.2 v-5.8 l-4.1,-4.9 l-4.1,4.9 z" fill="#2f3133" stroke="#585a5d" stroke-width="1.2"/><path d="M2.2,8.8 h5.2" stroke="#585a5d" stroke-width="1.2"/></svg>
<svg style="position:absolute;left:354.1px;top:456.2px;" width="10" height="13" viewBox="0 0 10 13"><path d="M0.7,12.1 h8.2 v-5.8 l-4.1,-4.9 l-4.1,4.9 z" fill="#2f3133" stroke="#585a5d" stroke-width="1.2"/><path d="M2.2,8.8 h5.2" stroke="#585a5d" stroke-width="1.2"/></svg>
<svg style="position:absolute;left:354.1px;top:600.4px;" width="10" height="13" viewBox="0 0 10 13"><path d="M0.7,12.1 h8.2 v-5.8 l-4.1,-4.9 l-4.1,4.9 z" fill="#2f3133" stroke="#585a5d" stroke-width="1.2"/><path d="M2.2,8.8 h5.2" stroke="#585a5d" stroke-width="1.2"/></svg>
<div style="position:absolute;left:365.0px;top:21.70px;height:20.6px;line-height:20.6px;font-family:'Liberation Mono','Noto Sans CJK JP',monospace;font-size:13.5px;color:#a9b7c6;white-space:pre;-webkit-text-stroke-width:0.3px;transform:scaleX(0.9259);transform-origin:0 50%;"><span style="color:#cc7832;">import </span><span style="background:#3a3a3a;color:#8c8c8c;">...</span></div>
<div style="position:absolute;left:365.0px;top:62.90px;height:20.6px;line-height:20.6px;font-family:'Liberation Mono','Noto Sans CJK JP',monospace;font-size:13.5px;color:#a9b7c6;white-space:pre;-webkit-text-stroke-width:0.3px;transform:scaleX(0.9259);transform-origin:0 50%;"><span style="color:#bbb529;">@Component</span></div>
<div style="position:absolute;left:365.0px;top:83.50px;height:20.6px;line-height:20.6px;font-family:'Liberation Mono','Noto Sans CJK JP',monospace;font-size:13.5px;color:#a9b7c6;white-space:pre;-webkit-text-stroke-width:0.3px;transform:scaleX(0.9259);transform-origin:0 50%;"><span style="color:#cc7832;">class </span>UserHandler(<span style="color:#cc7832;">private val </span><span style="color:#9876aa;">userUseCase</span>: UserUseCase) {</div>
<div style="position:absolute;left:365.0px;top:124.70px;height:20.6px;line-height:20.6px;font-family:'Liberation Mono','Noto Sans CJK JP',monospace;font-size:13.5px;color:#a9b7c6;white-space:pre;-webkit-text-stroke-width:0.3px;transform:scaleX(0.9259);transform-origin:0 50%;">    <span style="color:#cc7832;">suspend fun </span><span style="color:#ffc66d;">fetchUsers</span>(request: ServerRequest): ServerResponse <span style="color:#ffef28;font-weight:bold;">{</span></div>
<div style="position:absolute;left:365.0px;top:145.30px;height:20.6px;line-height:20.6px;font-family:'Liberation Mono','Noto Sans CJK JP',monospace;font-size:13.5px;color:#a9b7c6;white-space:pre;-webkit-text-stroke-width:0.3px;transform:scaleX(0.9259);transform-origin:0 50%;">        <span style="color:#cc7832;">return </span>ServerResponse.ok().contentType(MediaType.<span style="color:#9876aa;font-style:italic;">APPLICATION_JSON</span>)</div>
<div style="position:absolute;left:365.0px;top:165.90px;height:20.6px;line-height:20.6px;font-family:'Liberation Mono','Noto Sans CJK JP',monospace;font-size:13.5px;color:#a9b7c6;white-space:pre;-webkit-text-stroke-width:0.3px;transform:scaleX(0.9259);transform-origin:0 50%;">            .bodyValueAndAwait(<span style="color:#9876aa;">userUseCase</span>.searchUsers())</div>
<div style="position:absolute;left:365.0px;top:186.50px;height:20.6px;line-height:20.6px;font-family:'Liberation Mono','Noto Sans CJK JP',monospace;font-size:13.5px;color:#a9b7c6;white-space:pre;-webkit-text-stroke-width:0.3px;transform:scaleX(0.9259);transform-origin:0 50%;">    <span style="color:#ffef28;font-weight:bold;">}</span></div>
<div style="position:absolute;left:365.0px;top:227.70px;height:20.6px;line-height:20.6px;font-family:'Liberation Mono','Noto Sans CJK JP',monospace;font-size:13.5px;color:#a9b7c6;white-space:pre;-webkit-text-stroke-width:0.3px;transform:scaleX(0.9259);transform-origin:0 50%;">    <span style="color:#cc7832;">suspend fun </span><span style="color:#ffc66d;">fetchUser</span>(request: ServerRequest): ServerResponse {</div>
<div style="position:absolute;left:365.0px;top:248.30px;height:20.6px;line-height:20.6px;font-family:'Liberation Mono','Noto Sans CJK JP',monospace;font-size:13.5px;color:#a9b7c6;white-space:pre;-webkit-text-stroke-width:0.3px;transform:scaleX(0.9259);transform-origin:0 50%;">        <span style="color:#cc7832;">val </span>id = getRequestParam(request)</div>
<div style="position:absolute;left:365.0px;top:268.90px;height:20.6px;line-height:20.6px;font-family:'Liberation Mono','Noto Sans CJK JP',monospace;font-size:13.5px;color:#a9b7c6;white-space:pre;-webkit-text-stroke-width:0.3px;transform:scaleX(0.9259);transform-origin:0 50%;">        <span style="color:#cc7832;">try </span>{</div>
<div style="position:absolute;left:365.0px;top:289.50px;height:20.6px;line-height:20.6px;font-family:'Liberation Mono','Noto Sans CJK JP',monospace;font-size:13.5px;color:#a9b7c6;white-space:pre;-webkit-text-stroke-width:0.3px;transform:scaleX(0.9259);transform-origin:0 50%;">            <span style="color:#cc7832;">val </span>user = <span style="color:#9876aa;">userUseCase</span>.searchUserById(User.Id(id))</div>
<div style="position:absolute;left:365.0px;top:310.10px;height:20.6px;line-height:20.6px;font-family:'Liberation Mono','Noto Sans CJK JP',monospace;font-size:13.5px;color:#a9b7c6;white-space:pre;-webkit-text-stroke-width:0.3px;transform:scaleX(0.9259);transform-origin:0 50%;">            <span style="color:#cc7832;">return </span>ServerResponse.ok().contentType(MediaType.<span style="color:#9876aa;font-style:italic;">APPLICATION_JSON</span>)</div>
<div style="position:absolute;left:365.0px;top:330.70px;height:20.6px;line-height:20.6px;font-family:'Liberation Mono','Noto Sans CJK JP',monospace;font-size:13.5px;color:#a9b7c6;white-space:pre;-webkit-text-stroke-width:0.3px;transform:scaleX(0.9259);transform-origin:0 50%;">                .bodyValueAndAwait(user)</div>
<div style="position:absolute;left:365.0px;top:351.30px;height:20.6px;line-height:20.6px;font-family:'Liberation Mono','Noto Sans CJK JP',monospace;font-size:13.5px;color:#a9b7c6;white-space:pre;-webkit-text-stroke-width:0.3px;transform:scaleX(0.9259);transform-origin:0 50%;">        } <span style="color:#cc7832;">catch </span>(e: UserNotFoundException) {</div>
<div style="position:absolute;left:365.0px;top:371.90px;height:20.6px;line-height:20.6px;font-family:'Liberation Mono','Noto Sans CJK JP',monospace;font-size:13.5px;color:#a9b7c6;white-space:pre;-webkit-text-stroke-width:0.3px;transform:scaleX(0.9259);transform-origin:0 50%;">            <span style="color:#cc7832;">throw </span>ResponseStatusException(</div>
<div style="position:absolute;left:365.0px;top:392.50px;height:20.6px;line-height:20.6px;font-family:'Liberation Mono','Noto Sans CJK JP',monospace;font-size:13.5px;color:#a9b7c6;white-space:pre;-webkit-text-stroke-width:0.3px;transform:scaleX(0.9259);transform-origin:0 50%;">                HttpStatus.<span style="color:#9876aa;font-style:italic;">BAD_REQUEST</span><span style="color:#cc7832;">, </span>e.<span style="color:#9876aa;">message</span></div>
<div style="position:absolute;left:365.0px;top:413.10px;height:20.6px;line-height:20.6px;font-family:'Liberation Mono','Noto Sans CJK JP',monospace;font-size:13.5px;color:#a9b7c6;white-space:pre;-webkit-text-stroke-width:0.3px;transform:scaleX(0.9259);transform-origin:0 50%;">            )</div>
<div style="position:absolute;left:365.0px;top:433.70px;height:20.6px;line-height:20.6px;font-family:'Liberation Mono','Noto Sans CJK JP',monospace;font-size:13.5px;color:#a9b7c6;white-space:pre;-webkit-text-stroke-width:0.3px;transform:scaleX(0.9259);transform-origin:0 50%;">        }</div>
<div style="position:absolute;left:365.0px;top:454.30px;height:20.6px;line-height:20.6px;font-family:'Liberation Mono','Noto Sans CJK JP',monospace;font-size:13.5px;color:#a9b7c6;white-space:pre;-webkit-text-stroke-width:0.3px;transform:scaleX(0.9259);transform-origin:0 50%;">    }</div>
<div style="position:absolute;left:365.0px;top:495.50px;height:20.6px;line-height:20.6px;font-family:'Liberation Mono','Noto Sans CJK JP',monospace;font-size:13.5px;color:#a9b7c6;white-space:pre;-webkit-text-stroke-width:0.3px;transform:scaleX(0.9259);transform-origin:0 50%;">    <span style="color:#cc7832;">suspend fun </span><span style="color:#ffc66d;">postUser</span>(request: ServerRequest): ServerResponse {</div>
<div style="position:absolute;left:365.0px;top:516.10px;height:20.6px;line-height:20.6px;font-family:'Liberation Mono','Noto Sans CJK JP',monospace;font-size:13.5px;color:#a9b7c6;white-space:pre;-webkit-text-stroke-width:0.3px;transform:scaleX(0.9259);transform-origin:0 50%;">        <span style="color:#cc7832;">val </span>receivedUser = request.awaitBody&lt;UserRequestDto&gt;()</div>
<div style="position:absolute;left:365.0px;top:536.70px;height:20.6px;line-height:20.6px;font-family:'Liberation Mono','Noto Sans CJK JP',monospace;font-size:13.5px;color:#a9b7c6;white-space:pre;-webkit-text-stroke-width:0.3px;transform:scaleX(0.9259);transform-origin:0 50%;">        <span style="color:#cc7832;">val </span>user = <span style="color:#9876aa;">userUseCase</span>.postUser(receivedUser)</div>
<div style="position:absolute;left:365.0px;top:557.30px;height:20.6px;line-height:20.6px;font-family:'Liberation Mono','Noto Sans CJK JP',monospace;font-size:13.5px;color:#a9b7c6;white-space:pre;-webkit-text-stroke-width:0.3px;transform:scaleX(0.9259);transform-origin:0 50%;">        <span style="color:#cc7832;">return </span>ServerResponse.ok().contentType(MediaType.<span style="color:#9876aa;font-style:italic;">APPLICATION_JSON</span>)</div>
<div style="position:absolute;left:365.0px;top:577.90px;height:20.6px;line-height:20.6px;font-family:'Liberation Mono','Noto Sans CJK JP',monospace;font-size:13.5px;color:#a9b7c6;white-space:pre;-webkit-text-stroke-width:0.3px;transform:scaleX(0.9259);transform-origin:0 50%;">            .bodyValueAndAwait(user)</div>
<div style="position:absolute;left:365.0px;top:598.50px;height:20.6px;line-height:20.6px;font-family:'Liberation Mono','Noto Sans CJK JP',monospace;font-size:13.5px;color:#a9b7c6;white-space:pre;-webkit-text-stroke-width:0.3px;transform:scaleX(0.9259);transform-origin:0 50%;">    }</div>
<div style="position:absolute;left:365.0px;top:639.70px;height:20.6px;line-height:20.6px;font-family:'Liberation Mono','Noto Sans CJK JP',monospace;font-size:13.5px;color:#a9b7c6;white-space:pre;-webkit-text-stroke-width:0.3px;transform:scaleX(0.9259);transform-origin:0 50%;">    <span style="color:#cc7832;">internal fun </span><span style="color:#ffc66d;">getRequestParam</span>(request: ServerRequest): Int {</div>
<div style="position:absolute;left:1411.2px;top:38.3px;width:8.3px;height:440px;background:rgba(166,166,166,0.27);"></div>
<svg style="position:absolute;left:1402.8px;top:6.200000000000003px;" width="12" height="11" viewBox="0 0 12 11"><path d="M1.2,5.4 L4.4,8.6 L10.4,1.4" fill="none" stroke="#499c54" stroke-width="2.4"/></svg>
</div>
<div style="position:absolute;left:289.6px;top:80px;width:1px;height:652px;background:#2f3133;"></div>
<div style="position:absolute;left:289.4px;top:54px;width:1.3px;height:25px;background:#34373a;"></div>
<div style="position:absolute;left:1421px;top:54px;width:19px;height:678px;background:#3c3f41;"></div>
<div style="position:absolute;left:1420px;top:54px;width:1px;height:678px;background:#323232;"></div>
<svg style="position:absolute;left:1424.7px;top:63.4px;" width="13" height="10" viewBox="0 0 13 10"><path d="M0.4,9.6 C0,5.4 1,2.2 4.6,2 C6.2,1.9 7.2,2.4 8,3 C8.6,3.6 9.6,3.6 10.2,2.8 C10.8,2 10.4,0.8 11.2,0.4 C12,0 12.9,0.6 12.7,1.7 C12.5,2.4 11.7,2.3 11.8,1.6 C11.3,2.6 11.8,3.4 11.4,4.6 C11,6 9.8,6.6 9.4,6.8 V9.6 H7.4 V8 H6.4 V9.6 H4.2 V8 H3.2 V9.6 z" fill="#afb1b3"/></svg>
<span style="position:absolute;left:1441px;top:78.6px;height:22px;line-height:22px;font-size:11px;color:#b0b2b4;white-space:pre;transform-origin:0 0;transform:rotate(90deg) scaleX(0.8780);">Gradle</span>
<svg style="position:absolute;left:1425.9px;top:126px;" width="11" height="13" viewBox="0 0 11 13"><path d="M0.2,2.3 a5.2,2.1 0 0 1 10.4,0 v7.8 a5.2,2.1 0 0 1 -10.4,0 z" fill="#afb1b3"/><path d="M0.2,3.6 a5.2,2.1 0 0 0 10.4,0 M0.2,7.4 a5.2,2.1 0 0 0 10.4,0" fill="none" stroke="#3c3f41" stroke-width="1"/></svg>
<span style="position:absolute;left:1441px;top:142px;height:22px;line-height:22px;font-size:11px;color:#b0b2b4;white-space:pre;transform-origin:0 0;transform:rotate(90deg) scaleX(0.6646);">データベース</span>
<svg style="position:absolute;left:1425.8px;top:206.4px;" width="11" height="10" viewBox="0 0 11 10"><path d="M0,0 h10.6 v9.6 h-10.6 z" fill="#afb1b3"/><path d="M0,3.2 h10.6 M0,6.4 h10.6 M3.5,0 v9.6 M7.1,0 v9.6" stroke="#3c3f41" stroke-width="0.9"/></svg>
<span style="position:absolute;left:1441px;top:221px;height:22px;line-height:22px;font-size:11px;color:#b0b2b4;white-space:pre;transform-origin:0 0;transform:rotate(90deg) scaleX(0.8475);">SciView</span>
<svg style="position:absolute;left:1425.8px;top:687.6px;" width="12" height="12" viewBox="0 0 12 12"><path d="M5,0.6 C2.8,0.8 2,2.6 2,4.6 C2,6.8 1.2,7.8 0.2,8.6 V9.4 H9.8 V8.6 C8.8,7.8 8,6.8 8,4.6 C8,2.6 7.2,0.8 5,0.6 z" fill="#afb1b3"/><path d="M3.6,10.2 h2.8 c0,1.4 -2.8,1.4 -2.8,0 z" fill="#afb1b3"/><circle cx="9" cy="2.5" r="2.7" fill="#3c3f41"/><circle cx="9" cy="2.5" r="2" fill="#3d9be0"/></svg>
<span style="position:absolute;left:1441px;top:703.8px;height:22px;line-height:22px;font-size:11px;color:#b0b2b4;white-space:pre;transform-origin:0 0;transform:rotate(90deg) scaleX(0.8727);">通知</span>
<div style="position:absolute;left:0px;top:732px;width:1440px;height:21px;background:#3c3f41;"></div>
<div style="position:absolute;left:0px;top:752.4px;width:1440px;height:1px;background:#323232;"></div>
<svg style="position:absolute;left:29.3px;top:737.1px;" width="10" height="13" viewBox="0 0 10 13"><circle cx="2" cy="2" r="1.9" fill="#afb1b3"/><circle cx="7.4" cy="3.6" r="1.9" fill="#afb1b3"/><path d="M2,2 V12.4 M7.4,3.6 C7.4,7.2 2,6.6 2,10" fill="none" stroke="#afb1b3" stroke-width="1.9"/></svg>
<span style="position:absolute;left:44.5px;top:733px;height:23.5px;line-height:23.5px;font-size:11px;color:#bbbbbb;white-space:pre;transform:scaleX(0.8889);transform-origin:0 50%;">Git</span>
<svg style="position:absolute;left:75.3px;top:737.0px;" width="13" height="13" viewBox="0 0 13 13"><circle cx="6.2" cy="2.6" r="2.5" fill="#afb1b3"/><circle cx="2.6" cy="10.4" r="2.5" fill="#afb1b3"/><circle cx="10" cy="10.4" r="2.5" fill="#afb1b3"/><path d="M6.2,2.6 L2.6,10.4 M6.2,2.6 L10,10.4" stroke="#afb1b3" stroke-width="1.7"/><circle cx="10" cy="10.4" r="0.9" fill="#3c3f41"/><circle cx="2.6" cy="10.4" r="0.9" fill="#3c3f41"/></svg>
<span style="position:absolute;left:92.5px;top:733px;height:23.5px;line-height:23.5px;font-size:11px;color:#bbbbbb;white-space:pre;transform:scaleX(0.6558);transform-origin:0 50%;">エンドポイント</span>
<svg style="position:absolute;left:162px;top:736.8px;" width="13" height="14" viewBox="0 0 13 14"><path d="M9.6,3 A4.6,4.6 0 1 0 5.2,10" fill="none" stroke="#afb1b3" stroke-width="1.4"/><path d="M5.4,3.4 V6 L7,7" fill="none" stroke="#afb1b3" stroke-width="1.1"/><path d="M6.4,6.6 L12,10 L6.4,13.4 z" fill="#afb1b3"/></svg>
<span style="position:absolute;left:178.8px;top:733px;height:23.5px;line-height:23.5px;font-size:11px;color:#bbbbbb;white-space:pre;transform:scaleX(0.8811);transform-origin:0 50%;">Profiler</span>
<svg style="position:absolute;left:230.5px;top:737.3px;" width="12" height="13" viewBox="0 0 12 13"><path d="M6,0 L11.8,2.8 L6,5.6 L0.2,2.8 z" fill="#afb1b3"/><path d="M0.2,5.6 L6,8.4 L11.8,5.6 M0.2,8.4 L6,11.2 L11.8,8.4" fill="none" stroke="#afb1b3" stroke-width="1.4"/></svg>
<span style="position:absolute;left:247px;top:733px;height:23.5px;line-height:23.5px;font-size:11px;color:#bbbbbb;white-space:pre;transform:scaleX(0.8409);transform-origin:0 50%;">Python Packages</span>
<svg style="position:absolute;left:340.8px;top:738.8px;" width="10" height="9" viewBox="0 0 10 9"><path d="M0,1 h1.8 M0,4.2 h1.8 M0,7.4 h1.8" stroke="#afb1b3" stroke-width="1.6"/><path d="M3.2,1 h6.8 M3.2,4.2 h6.8 M3.2,7.4 h6.8" stroke="#afb1b3" stroke-width="1.6"/></svg>
<span style="position:absolute;left:355.7px;top:733px;height:23.5px;line-height:23.5px;font-size:11px;color:#bbbbbb;white-space:pre;transform:scaleX(0.8329);transform-origin:0 50%;">TODO</span>
<svg style="position:absolute;left:401.8px;top:737.3px;" width="11" height="13" viewBox="0 0 11 13"><path d="M5.5,0 L10.8,2.8 L5.5,5.6 L0.2,2.8 z" fill="#afb1b3"/><path d="M0.2,5.6 L5.5,8.4 L10.8,5.6 M0.2,8.4 L5.5,11.2 L10.8,8.4" fill="none" stroke="#afb1b3" stroke-width="1.4"/></svg>
<span style="position:absolute;left:417.2px;top:733px;height:23.5px;line-height:23.5px;font-size:11px;color:#bbbbbb;white-space:pre;transform:scaleX(0.8818);transform-origin:0 50%;">依存関係</span>
<svg style="position:absolute;left:474.4px;top:737.8px;" width="10" height="10" viewBox="0 0 10 10"><circle cx="5" cy="5" r="5" fill="#afb1b3"/><path d="M5,2.2 v3.4" stroke="#3c3f41" stroke-width="1.5"/><circle cx="5" cy="7.5" r="0.85" fill="#3c3f41"/></svg>
<span style="position:absolute;left:489.8px;top:733px;height:23.5px;line-height:23.5px;font-size:11px;color:#bbbbbb;white-space:pre;transform:scaleX(0.8864);transform-origin:0 50%;">問題</span>
<svg style="position:absolute;left:527px;top:737.3px;" width="13" height="12" viewBox="0 0 13 12"><path d="M0.4,9.4 C0.4,5.4 3.4,3.6 7.4,3.6 C9.4,3.6 11,2.4 12,0.6 C13.6,5 12,11 6,11 C3.4,11 1.6,10.6 0.4,9.4 z" fill="#afb1b3"/><path d="M0.2,11 C2.6,9 5,8 8,7.2" stroke="#3c3f41" stroke-width="0.8" fill="none"/></svg>
<span style="position:absolute;left:543.2px;top:733px;height:23.5px;line-height:23.5px;font-size:11px;color:#bbbbbb;white-space:pre;transform:scaleX(0.8743);transform-origin:0 50%;">Spring</span>
<svg style="position:absolute;left:590px;top:738.3px;" width="11" height="10" viewBox="0 0 11 10"><rect x="0" y="0" width="10.8" height="9.6" fill="#afb1b3"/><path d="M1.8,2.2 L4.2,4.4 L1.8,6.6 M5.2,7.2 h3.4" fill="none" stroke="#3c3f41" stroke-width="1.1"/></svg>
<span style="position:absolute;left:606.3px;top:733px;height:23.5px;line-height:23.5px;font-size:11px;color:#bbbbbb;white-space:pre;transform:scaleX(0.6309);transform-origin:0 50%;">ターミナル</span>
<svg style="position:absolute;left:659px;top:737.3px;" width="12" height="12" viewBox="0 0 12 12"><path d="M3.4,0.4 h4.6 l3.2,3.2 v4.6 l-3.2,3.2 h-4.6 l-3.2,-3.2 v-4.6 z" fill="#afb1b3"/><path d="M4.2,3 L8.6,5.9 L4.2,8.8 z" fill="#3c3f41"/></svg>
<span style="position:absolute;left:675.3px;top:733px;height:23.5px;line-height:23.5px;font-size:11px;color:#bbbbbb;white-space:pre;transform:scaleX(0.6364);transform-origin:0 50%;">サービス</span>
<div style="position:absolute;left:0px;top:753.4px;width:1440px;height:18.6px;background:#3c3f41;"></div>
<svg style="position:absolute;left:4.5px;top:757px;" width="13" height="12" viewBox="0 0 13 12"><rect x="2.8" y="0.6" width="9.6" height="8.6" fill="none" stroke="#9a9c9e" stroke-width="1.2"/><path d="M0.6,3 V11.4 H10" fill="none" stroke="#9a9c9e" stroke-width="1.2"/></svg>
<span style="position:absolute;left:27px;top:753.5px;height:19px;line-height:19px;font-size:12px;color:#bbbbbb;white-space:pre;transform:scaleX(0.8224);transform-origin:0 50%;">1</span>
<span style="position:absolute;left:35.8px;top:753.5px;height:19px;line-height:19px;font-size:12px;color:#bbbbbb;white-space:pre;transform:scaleX(0.6681);transform-origin:0 50%;">個のファイルをコミットしました:</span>
<span style="position:absolute;left:161.7px;top:753.5px;height:19px;line-height:19px;font-size:12px;color:#bbbbbb;white-space:pre;transform:scaleX(0.9609);transform-origin:0 50%;">typo</span>
<span style="position:absolute;left:187.5px;top:753.5px;height:19px;line-height:19px;font-size:12px;color:#bbbbbb;white-space:pre;transform:scaleX(0.8750);transform-origin:0 50%;">(今)</span>
<span style="position:absolute;left:1099.5px;top:753.5px;height:19px;line-height:19px;font-size:12px;color:#bbbbbb;white-space:pre;transform:scaleX(0.8776);transform-origin:0 50%;">22:6</span>
<span style="position:absolute;left:1132px;top:753.5px;height:19px;line-height:19px;font-size:12px;color:#bbbbbb;white-space:pre;transform:scaleX(0.7848);transform-origin:0 50%;">LF</span>
<span style="position:absolute;left:1153.5px;top:753.5px;height:19px;line-height:19px;font-size:12px;color:#bbbbbb;white-space:pre;transform:scaleX(0.8676);transform-origin:0 50%;">UTF-8</span>
<span style="position:absolute;left:1193.5px;top:753.5px;height:19px;line-height:19px;font-size:12px;color:#bbbbbb;white-space:pre;transform:scaleX(0.7512);transform-origin:0 50%;">4 スペース</span>
<svg style="position:absolute;left:1248px;top:757px;" width="13" height="14" viewBox="0 0 13 14"><circle cx="2.2" cy="2" r="1.7" fill="#afb1b3"/><circle cx="7.6" cy="3.6" r="1.7" fill="#afb1b3"/><path d="M2.2,2 V12 M7.6,3.6 C7.6,7 2.2,6.6 2.2,9.8" fill="none" stroke="#afb1b3" stroke-width="1.5"/><circle cx="8.6" cy="10.4" r="3.6" fill="#3c3f41"/><circle cx="8.6" cy="10.4" r="2.9" fill="#499c54"/></svg>
<span style="position:absolute;left:1263px;top:753.5px;height:19px;line-height:19px;font-size:12px;color:#bbbbbb;white-space:pre;transform:scaleX(0.9704);transform-origin:0 50%;">feature/bind-spring-nuxt</span>
<svg style="position:absolute;left:1393.6px;top:756.4px;" width="14" height="13" viewBox="0 0 14 13"><rect x="4.2" y="5.6" width="8.6" height="6.6" fill="#afb1b3"/><path d="M6.2,5.6 V3.2 C6.2,0.2 1.2,0.2 1.2,3.2 V4.8" fill="none" stroke="#afb1b3" stroke-width="1.5"/></svg>
<svg style="position:absolute;left:1416px;top:755.6px;" width="18" height="16" viewBox="0 0 18 16"><path d="M4,11.4 C0.6,11.4 0,7 3.2,6.4 C3,2.2 8.4,0.8 10.2,4 C13.2,2.8 15.4,5.6 14.4,7.6 C16.8,8 16.4,11.4 14.2,11.4 z" fill="#afb1b3"/><text x="8.2" y="10" font-family="'Liberation Sans',sans-serif" font-size="8" font-weight="bold" fill="#3c3f41" text-anchor="middle">?</text><circle cx="13.6" cy="12" r="4" fill="#3c3f41"/><path d="M13.6,8.6 v6.8 M10.2,12 h6.8 M11.2,9.6 l4.8,4.8 M16,9.6 l-4.8,4.8" stroke="#afb1b3" stroke-width="1.3"/><circle cx="13.6" cy="12" r="2.3" fill="#afb1b3"/><circle cx="13.6" cy="12" r="1" fill="#3c3f41"/></svg></div></body></html>
